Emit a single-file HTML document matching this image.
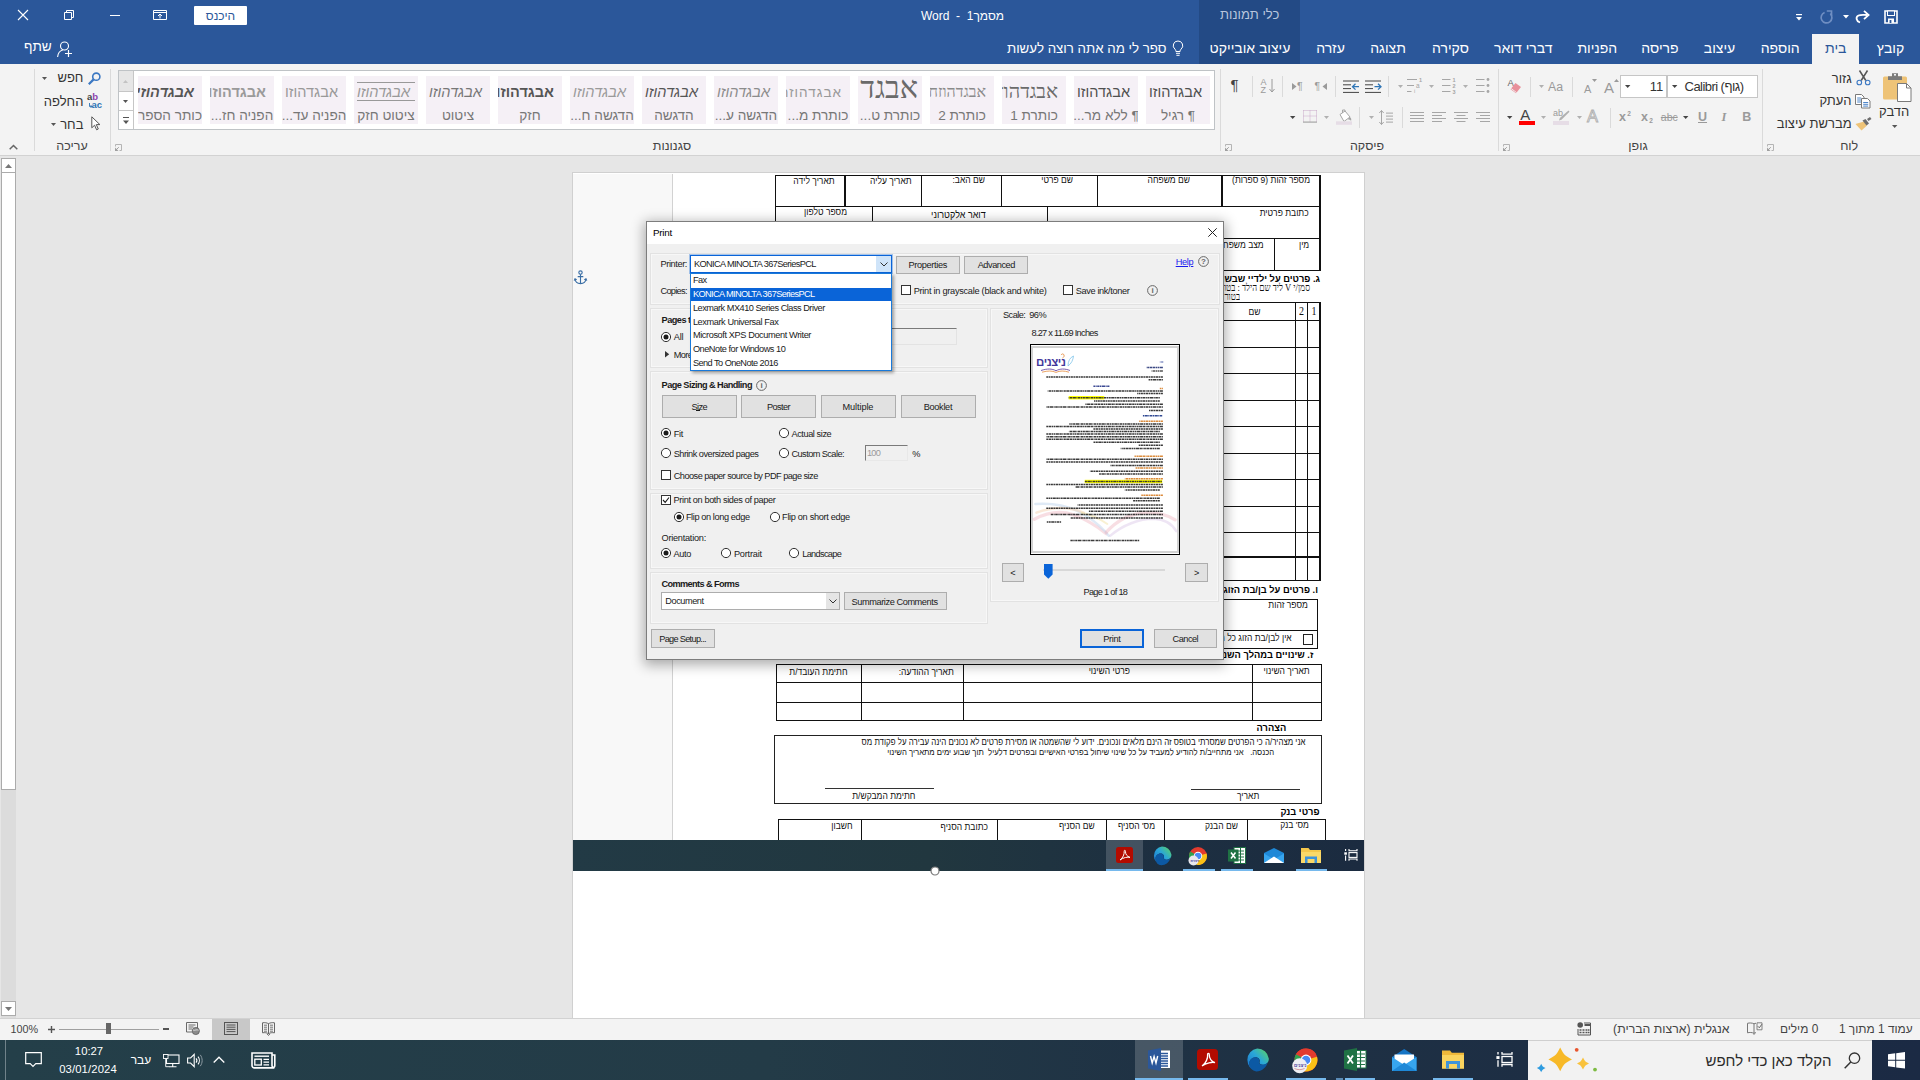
<!DOCTYPE html>
<html lang="he">
<head>
<meta charset="utf-8">
<title>מסמך1 - Word</title>
<style>
html,body{margin:0;padding:0}
body{width:1920px;height:1080px;overflow:hidden;position:relative;background:#e6e6e6;font-family:"Liberation Sans",sans-serif;font-size:12px;color:#262626}
.a{position:absolute}
.t{position:absolute;white-space:nowrap;line-height:16px;height:16px;direction:rtl}
.l{direction:ltr}
svg{position:absolute;overflow:visible}
/* title */
#title{left:0;top:0;width:1920px;height:64px;background:#2b579a}
#ctx{left:1199px;top:0;width:101px;height:64px;background:#234a85}
/* ribbon */
#ribbon{left:0;top:64px;width:1920px;height:91px;background:#f3f3f3;border-bottom:1px solid #d2d2d2}
</style>
</head>
<body>
<!-- TITLE BAR -->
<div id="title" class="a"></div>
<div id="ctx" class="a"></div>
<!-- RIBBON -->
<div id="ribbon" class="a"></div>
<!-- DOC AREA -->
<div id="doc" class="a" style="left:0;top:156px;width:1920px;height:862px;background:#e6e6e6"></div>
<div id="page" class="a" style="left:573px;top:173px;width:791px;height:845px;background:#fff;box-shadow:0 0 0 1px #d0d0d0"></div>
<!-- STATUS BAR -->
<div id="status" class="a" style="left:0;top:1018px;width:1920px;height:22px;background:#f3f3f3;border-top:1px solid #d2d2d2;box-sizing:border-box"></div>
<!-- TASKBAR -->
<div id="taskbar" class="a" style="left:0;top:1040px;width:1920px;height:40px;background:linear-gradient(to right,#243f49 0%,#233b47 40%,#1f3244 60%,#1b2a44 100%)"></div>
<!-- DIALOG -->
<!-- p1_title -->
<svg style="left:17px;top:9px;" width="12" height="12" viewBox="0 0 12 12"><path d="M1 1 L11 11 M11 1 L1 11" stroke="#fff" stroke-width="1.1" fill="none"/></svg>
<svg style="left:63px;top:9px;" width="12" height="12" viewBox="0 0 12 12"><path d="M1.5 3.5 h7 v7 h-7 z M3.5 3.5 v-2 h7 v7 h-2" stroke="#fff" stroke-width="1" fill="none"/></svg>
<div class="a" style="left:110px;top:15px;width:10px;height:1px;background:#fff;"></div>
<svg style="left:153px;top:9px;" width="14" height="12" viewBox="0 0 14 12"><path d="M0.5 1.5 h13 v9 h-13 z M0.5 3.5 h13" stroke="#fff" stroke-width="1" fill="none"/><path d="M7 9.5 v-4.5 M5 7 l2 -2 l2 2" stroke="#fff" stroke-width="1" fill="none"/></svg>
<div class="a" style="left:194px;top:6px;width:53px;height:19px;background:#fff;border-radius:1px"></div>
<div class="t" style="top:9px;font-size:12px;line-height:14px;height:14px;left:-79.50px;width:600px;text-align:center;color:#2b579a;">היכנס</div>
<div class="t" style="top:9px;font-size:12px;line-height:14px;height:14px;left:662.50px;width:600px;text-align:center;color:#fff;direction:rtl;">מסמך1 &nbsp;-&nbsp; Word</div>
<div class="t" style="top:7px;font-size:13px;line-height:15px;height:15px;left:949.70px;width:600px;text-align:center;color:#b9c6dd;">כלי תמונות</div>
<svg style="left:1884px;top:10px;" width="14" height="14" viewBox="0 0 14 14"><path d="M1 1 h12 v12 h-12 z" fill="none" stroke="#fff" stroke-width="1.6"/><rect x="3.5" y="1" width="7" height="4.5" fill="#2b579a" stroke="#fff" stroke-width="1"/><rect x="4" y="8.5" width="6" height="4.5" fill="#fff"/><rect x="5.6" y="10" width="1.8" height="3" fill="#2b579a"/></svg>
<svg style="left:1855px;top:10px;" width="15" height="13" viewBox="0 0 15 13"><path d="M5 12.5 C1 11 0.5 7 3.5 5.5 C5.5 4.6 8 5 12 5" fill="none" stroke="#fff" stroke-width="1.8"/><path d="M9 0.8 L13.6 5 L9 9.2" fill="none" stroke="#fff" stroke-width="1.8"/></svg>
<svg style="left:1842.5px;top:15px;" width="6" height="4" viewBox="0 0 6 4"><path d="M0 0 h6 l-3 3.4 z" fill="#fff"/></svg>
<svg style="left:1820px;top:10px;" width="14" height="13" viewBox="0 0 14 13"><path d="M4.6 2.5 A5.4 5.4 0 1 0 10.3 3.7" fill="none" stroke="#6f8ec2" stroke-width="1.7"/><path d="M6.8 1 h4.7 v4.700" fill="none" stroke="#6f8ec2" stroke-width="1.7"/></svg>
<svg style="left:1795.5px;top:13.5px;" width="6" height="7" viewBox="0 0 6 7"><rect x="0" y="0" width="6" height="1.2" fill="#fff"/><path d="M0 3 h6 l-3 3.6 z" fill="#fff"/></svg>
<div class="a" style="left:1812px;top:34px;width:47px;height:30px;background:#f3f3f3;"></div>
<div class="t" style="top:40px;font-size:14px;line-height:16px;height:16px;left:1535.80px;width:600px;text-align:center;color:#2b579a;">בית</div>
<div class="t" style="top:40px;font-size:14px;line-height:16px;height:16px;left:1590.50px;width:600px;text-align:center;color:#fff;">קובץ</div>
<div class="t" style="top:40px;font-size:14px;line-height:16px;height:16px;left:1480.20px;width:600px;text-align:center;color:#fff;">הוספה</div>
<div class="t" style="top:40px;font-size:14px;line-height:16px;height:16px;left:1419.50px;width:600px;text-align:center;color:#fff;">עיצוב</div>
<div class="t" style="top:40px;font-size:14px;line-height:16px;height:16px;left:1360.00px;width:600px;text-align:center;color:#fff;">פריסה</div>
<div class="t" style="top:40px;font-size:14px;line-height:16px;height:16px;left:1297.30px;width:600px;text-align:center;color:#fff;">הפניות</div>
<div class="t" style="top:40px;font-size:14px;line-height:16px;height:16px;left:1223.30px;width:600px;text-align:center;color:#fff;">דברי דואר</div>
<div class="t" style="top:40px;font-size:14px;line-height:16px;height:16px;left:1150.50px;width:600px;text-align:center;color:#fff;">סקירה</div>
<div class="t" style="top:40px;font-size:14px;line-height:16px;height:16px;left:1088.00px;width:600px;text-align:center;color:#fff;">תצוגה</div>
<div class="t" style="top:40px;font-size:14px;line-height:16px;height:16px;left:1030.50px;width:600px;text-align:center;color:#fff;">עזרה</div>
<div class="t" style="top:40px;font-size:14px;line-height:16px;height:16px;left:950.00px;width:600px;text-align:center;color:#fff;">עיצוב אובייקט</div>
<svg style="left:1172px;top:40px;" width="12" height="17" viewBox="0 0 12 17"><path d="M6 1 a4.6 4.6 0 0 1 3 8.2 c-0.7 0.7 -0.9 1.3 -0.9 2.3 h-4.2 c0 -1 -0.2 -1.6 -0.9 -2.3 a4.6 4.6 0 0 1 3 -8.2 z M4 13.3 h4 M4.4 15.3 h3.2" fill="none" stroke="#fff" stroke-width="1"/></svg>
<div class="t" style="top:41px;font-size:13.3px;line-height:15px;height:15px;right:753.50px;color:#fff;">ספר לי מה אתה רוצה לעשות</div>
<svg style="left:57px;top:41px;" width="16" height="17" viewBox="0 0 16 17"><circle cx="7.5" cy="5" r="4" fill="none" stroke="#fff" stroke-width="1.1"/><path d="M0.6 16 c0.4 -4 2.6 -6.4 5.2 -7" fill="none" stroke="#fff" stroke-width="1.1"/><path d="M11.5 9 v7 M8 12.5 h7" stroke="#fff" stroke-width="1.2"/></svg>
<div class="t" style="top:39px;font-size:13.6px;line-height:15px;height:15px;left:24.00px;color:#fff;">שתף</div>
<!-- p2_ribbon -->
<svg style="left:1883px;top:72px;" width="29" height="31" viewBox="0 0 29 31"><rect x="0" y="4.5" width="24" height="23" rx="1.5" fill="#eec377"/><path d="M5 4.2 h14 v3.8 h-14 z M9 1.2 h6 v3 h-6 z" fill="#7a7a7a"/><rect x="11" y="2" width="2" height="1.6" fill="#f3f3f3"/><path d="M14.5 11.5 h9 l4.5 4.5 v13.5 h-13.5 z" fill="#fff" stroke="#7a7a7a" stroke-width="1"/><path d="M23.5 11.5 v4.5 h4.5" fill="none" stroke="#7a7a7a" stroke-width="1"/></svg>
<div class="t" style="top:104px;font-size:13px;line-height:15px;height:15px;left:1594.20px;width:600px;text-align:center;color:#333;">הדבק</div>
<svg style="left:1892px;top:125.2px;" width="5.4" height="3" viewBox="0 0 5.4 3"><path d="M0 0 h5.4 l-2.7 3 z" fill="#555"/></svg>
<svg style="left:1855.5px;top:70px;" width="15" height="15.5" viewBox="0 0 15 15.5"><path d="M3.5 0.5 L9.8 10.5 M11.5 0.5 L5.2 10.5" stroke="#555" stroke-width="1.5" fill="none"/><circle cx="3.3" cy="12.5" r="2.3" fill="none" stroke="#3b78c3" stroke-width="1.1"/><circle cx="11.7" cy="12.5" r="2.3" fill="none" stroke="#3b78c3" stroke-width="1.1"/></svg>
<div class="t" style="top:71px;font-size:13px;line-height:15px;height:15px;right:68.20px;color:#333;">גזור</div>
<svg style="left:1855px;top:94px;" width="16" height="15" viewBox="0 0 16 15"><path d="M0.5 0.5 h6 l2.5 2.5 v7.5 h-8.5 z" fill="#fff" stroke="#7a7a7a" stroke-width="1"/><path d="M2.2 4 h4 M2.2 6 h4 M2.2 8 h4" stroke="#3b78c3" stroke-width="0.9"/><path d="M6.5 4.5 h6 l2.5 2.5 v7 h-8.5 z" fill="#fff" stroke="#7a7a7a" stroke-width="1"/><path d="M8.2 8.5 h5 M8.2 10.3 h5 M8.2 12.1 h5" stroke="#3b78c3" stroke-width="0.9"/></svg>
<div class="t" style="top:93px;font-size:13px;line-height:15px;height:15px;right:68.40px;color:#333;">העתק</div>
<svg style="left:1855px;top:117px;" width="17" height="14" viewBox="0 0 17 14"><path d="M0.5 7 L9 4.5 L12 8.5 L6.5 13.5 z" fill="#eec377"/><path d="M7.5 3.5 l3 -1.5 l3.5 4.5 l-2.5 2 z" fill="#6d6d6d"/><path d="M12 2 l3 -2 l1.5 2 l-3 2 z" fill="#6d6d6d"/></svg>
<div class="t" style="top:116px;font-size:13px;line-height:15px;height:15px;right:68.40px;color:#333;">מברשת עיצוב</div>
<div class="t" style="top:139px;font-size:12.5px;line-height:14px;height:14px;left:1549.20px;width:600px;text-align:center;color:#444;">לוח</div>
<svg style="left:1767px;top:144px;" width="7" height="7" viewBox="0 0 7 7"><path d="M0.5 2.5 v-2 h6 v6 h-2" fill="none" stroke="#b4b4b4" stroke-width="1"/><path d="M0.8 6.200 l3 -3" fill="none" stroke="#a0a0a0" stroke-width="1"/><path d="M0 3.500 v3.500 h3.500 z" fill="#a0a0a0"/></svg>
<div class="a" style="left:1762px;top:68.5px;width:1px;height:82.5px;background:#dadada;"></div>
<div class="a" style="left:1667px;top:75px;width:91px;height:23px;background:#fff;border:1px solid #c6c6c6;box-sizing:border-box;"></div>
<div class="a" style="left:1620px;top:75px;width:47px;height:23px;background:#fff;border:1px solid #c6c6c6;box-sizing:border-box;"></div>
<div class="t" style="top:79px;font-size:13px;line-height:15px;height:15px;right:176.50px;color:#333;letter-spacing:-0.55px;direction:ltr;">Calibri (גוף)</div>
<svg style="left:1672px;top:85px;" width="5.4" height="3" viewBox="0 0 5.4 3"><path d="M0 0 h5.4 l-2.7 3 z" fill="#444"/></svg>
<div class="t" style="top:79px;font-size:13px;line-height:15px;height:15px;right:256.70px;color:#333;">11</div>
<svg style="left:1625px;top:85px;" width="5.4" height="3" viewBox="0 0 5.4 3"><path d="M0 0 h5.4 l-2.7 3 z" fill="#444"/></svg>
<div class="t" style="top:79px;font-size:15px;line-height:17px;height:17px;left:1604.00px;color:#9a9a9a;">A</div>
<svg style="left:1613.5px;top:79px;" width="5" height="3" viewBox="0 0 5 3"><path d="M0 3 h5 l-2.5 -3 z" fill="#9a9a9a"/></svg>
<div class="t" style="top:83px;font-size:11px;line-height:12px;height:12px;left:1584.00px;color:#9a9a9a;">A</div>
<svg style="left:1591.5px;top:79px;" width="5" height="3" viewBox="0 0 5 3"><path d="M0 0 h5 l-2.5 3 z" fill="#9a9a9a"/></svg>
<div class="a" style="left:1572px;top:76.5px;width:1px;height:20.0px;background:#dadada;"></div>
<div class="t" style="top:80px;font-size:12.3px;line-height:14px;height:14px;left:1548.00px;color:#9a9a9a;">Aa</div>
<svg style="left:1539px;top:85px;" width="5" height="3" viewBox="0 0 5 3"><path d="M0 0 h5 l-2.5 3 z" fill="#b0b0b0"/></svg>
<div class="a" style="left:1530px;top:76.5px;width:1px;height:20.0px;background:#dadada;"></div>
<svg style="left:1507px;top:78px;" width="16" height="16" viewBox="0 0 16 16"><text x="0.5" y="8" font-size="9.5" font-family="Liberation Sans" fill="#666">A</text><path d="M8.5 5 l5.5 4 l-5 6.3 l-5.5 -4 z" fill="#e8909b"/><path d="M4.2 10.6 l5.4 4" stroke="#f3f3f3" stroke-width="0.9"/></svg>
<div class="t" style="top:110px;font-size:12.5px;line-height:14px;height:14px;left:1742.30px;color:#9a9a9a;font-weight:700;">B</div>
<div class="t" style="top:110px;font-size:12.5px;line-height:14px;height:14px;left:1721.50px;color:#9a9a9a;font-weight:700;font-family:'Liberation Serif',serif;font-style:italic;">I</div>
<div class="t" style="top:110px;font-size:12.5px;line-height:14px;height:14px;left:1698.00px;color:#9a9a9a;font-weight:700;text-decoration:underline;">U</div>
<svg style="left:1683px;top:116px;" width="5.4" height="3" viewBox="0 0 5.4 3"><path d="M0 0 h5.4 l-2.7 3 z" fill="#444"/></svg>
<div class="t" style="top:111px;font-size:10.5px;line-height:12px;height:12px;left:1660.80px;color:#9a9a9a;text-decoration:line-through;">abc</div>
<div class="t" style="top:110px;font-size:12.5px;line-height:14px;height:14px;left:1641.00px;color:#9a9a9a;font-weight:700;">x</div>
<div class="t" style="top:117px;font-size:6.5px;line-height:7px;height:7px;left:1649.30px;color:#9a9a9a;font-weight:700;">2</div>
<div class="t" style="top:110px;font-size:12.5px;line-height:14px;height:14px;left:1619.00px;color:#9a9a9a;font-weight:700;">x</div>
<div class="t" style="top:110px;font-size:6.5px;line-height:7px;height:7px;left:1627.30px;color:#9a9a9a;font-weight:700;">2</div>
<div class="a" style="left:1610px;top:107.5px;width:1px;height:20.0px;background:#dadada;"></div>
<svg style="left:1586px;top:108px;" width="16" height="16" viewBox="0 0 16 16"><text x="1" y="13.600" font-size="16.500" font-family="Liberation Sans" fill="#fafafa" stroke="#b0b0b0" stroke-width="0.9">A</text></svg>
<svg style="left:1577px;top:116px;" width="5" height="3" viewBox="0 0 5 3"><path d="M0 0 h5 l-2.5 3 z" fill="#b0b0b0"/></svg>
<div class="t" style="top:108px;font-size:9px;line-height:10px;height:10px;left:1553.00px;color:#9a9a9a;">ab</div>
<svg style="left:1557px;top:110px;" width="13" height="11" viewBox="0 0 13 11"><path d="M11.5 0.5 l1 1.2 l-8 8 l-2.5 0.8 l0.8 -2.5 z" fill="#b0b0b0"/></svg>
<div class="a" style="left:1553px;top:121px;width:16px;height:3.6px;background:#e6dde6;"></div>
<svg style="left:1540.7px;top:116px;" width="5" height="3" viewBox="0 0 5 3"><path d="M0 0 h5 l-2.5 3 z" fill="#b0b0b0"/></svg>
<div class="t" style="top:106px;font-size:15px;line-height:17px;height:17px;left:1520.30px;color:#444;">A</div>
<div class="a" style="left:1519px;top:121px;width:16px;height:3.7px;background:#ff0000;"></div>
<svg style="left:1507px;top:116px;" width="5.4" height="3" viewBox="0 0 5.4 3"><path d="M0 0 h5.4 l-2.7 3 z" fill="#444"/></svg>
<div class="t" style="top:139px;font-size:12.5px;line-height:14px;height:14px;left:1338.00px;width:600px;text-align:center;color:#444;">גופן</div>
<svg style="left:1503px;top:144px;" width="7" height="7" viewBox="0 0 7 7"><path d="M0.5 2.5 v-2 h6 v6 h-2" fill="none" stroke="#b4b4b4" stroke-width="1"/><path d="M0.8 6.200 l3 -3" fill="none" stroke="#a0a0a0" stroke-width="1"/><path d="M0 3.500 v3.500 h3.500 z" fill="#a0a0a0"/></svg>
<div class="a" style="left:1498px;top:68.5px;width:1px;height:82.5px;background:#dadada;"></div>
<svg style="left:1475.5px;top:78px;" width="14" height="15" viewBox="0 0 14 15"><rect x="0" y="1" width="8.5" height="1" fill="#a6a6a6"/><circle cx="12" cy="1.5" r="1.4" fill="#a6a6a6"/><rect x="0" y="7" width="8.5" height="1" fill="#a6a6a6"/><circle cx="12" cy="7.5" r="1.4" fill="#a6a6a6"/><rect x="0" y="13" width="8.5" height="1" fill="#a6a6a6"/><circle cx="12" cy="13.5" r="1.4" fill="#a6a6a6"/></svg>
<svg style="left:1463px;top:85px;" width="5" height="3" viewBox="0 0 5 3"><path d="M0 0 h5 l-2.5 3 z" fill="#b0b0b0"/></svg>
<svg style="left:1441.8px;top:78px;" width="14" height="15" viewBox="0 0 14 15"><rect x="0" y="1" width="8.5" height="1" fill="#a6a6a6"/><text x="10.5" y="3.7" font-size="5.5" font-family="Liberation Sans" fill="#a6a6a6" font-weight="700">1</text><rect x="0" y="7" width="8.5" height="1" fill="#a6a6a6"/><text x="10.5" y="9.7" font-size="5.5" font-family="Liberation Sans" fill="#a6a6a6" font-weight="700">2</text><rect x="0" y="13" width="8.5" height="1" fill="#a6a6a6"/><text x="10.5" y="15.7" font-size="5.5" font-family="Liberation Sans" fill="#a6a6a6" font-weight="700">3</text></svg>
<svg style="left:1429px;top:85px;" width="5" height="3" viewBox="0 0 5 3"><path d="M0 0 h5 l-2.5 3 z" fill="#b0b0b0"/></svg>
<svg style="left:1406.8px;top:78px;" width="16" height="15" viewBox="0 0 16 15"><rect x="0" y="1" width="10" height="1" fill="#a6a6a6"/><rect x="0" y="7" width="7" height="1" fill="#a6a6a6"/><rect x="0" y="13" width="4.5" height="1" fill="#a6a6a6"/><text x="12" y="3.5" font-size="5.5" font-family="Liberation Sans" fill="#a6a6a6" font-weight="700">1</text><text x="9" y="9.6" font-size="6.5" font-family="Liberation Sans" fill="#a6a6a6">a</text><text x="7" y="15.3" font-size="5.5" font-family="Liberation Sans" fill="#a6a6a6">i</text></svg>
<svg style="left:1397.7px;top:85px;" width="5" height="3" viewBox="0 0 5 3"><path d="M0 0 h5 l-2.5 3 z" fill="#b0b0b0"/></svg>
<div class="a" style="left:1388px;top:76px;width:1px;height:20.5px;background:#dadada;"></div>
<svg style="left:1365px;top:79.5px;" width="16.5" height="13" viewBox="0 0 16.5 13"><rect x="0" y="0.5" width="16" height="1" fill="#444"/><rect x="0" y="4.3" width="8" height="1" fill="#444"/><rect x="0" y="8.1" width="8" height="1" fill="#444"/><rect x="0" y="11.9" width="16" height="1" fill="#444" /><path d="M9.5 6.7 h6 M13 3.8 l3 2.9 l-3 2.9" fill="none" stroke="#2e75b6" stroke-width="1.3"/></svg>
<svg style="left:1343px;top:79.5px;" width="16.5" height="13" viewBox="0 0 16.5 13"><rect x="0" y="0.5" width="16" height="1" fill="#444"/><rect x="0" y="4.3" width="8" height="1" fill="#444"/><rect x="0" y="8.1" width="8" height="1" fill="#444"/><rect x="0" y="11.9" width="16" height="1" fill="#444" /><path d="M16 6.7 h-6 M12.5 3.8 l-3 2.9 l3 2.9" fill="none" stroke="#2e75b6" stroke-width="1.3"/></svg>
<div class="a" style="left:1335px;top:76px;width:1px;height:20.5px;background:#dadada;"></div>
<div class="t" style="top:80px;font-size:10.5px;line-height:12px;height:12px;left:1314.50px;color:#9a9a9a;">¶</div>
<svg style="left:1321.5px;top:82.5px;" width="5" height="7" viewBox="0 0 5 7"><path d="M5 0 v7 l-4.5 -3.5 z" fill="#9a9a9a"/></svg>
<div class="t" style="top:80px;font-size:10.5px;line-height:12px;height:12px;left:1297.00px;color:#9a9a9a;">¶</div>
<svg style="left:1291.5px;top:82.5px;" width="5" height="7" viewBox="0 0 5 7"><path d="M0 0 v7 l4.5 -3.5 z" fill="#9a9a9a"/></svg>
<div class="a" style="left:1282px;top:76px;width:1px;height:20.5px;background:#dadada;"></div>
<div class="t" style="top:77px;font-size:9px;line-height:10px;height:10px;left:1260.50px;color:#9a9a9a;">A</div>
<div class="t" style="top:85px;font-size:9px;line-height:10px;height:10px;left:1260.50px;color:#9a9a9a;">Z</div>
<svg style="left:1268.5px;top:78.5px;" width="6" height="14" viewBox="0 0 6 14"><path d="M3 0 v13 M0.5 10 l2.5 3 l2.5 -3" fill="none" stroke="#9a9a9a" stroke-width="1"/></svg>
<div class="a" style="left:1252px;top:76px;width:1px;height:20.5px;background:#dadada;"></div>
<div class="t" style="top:76px;font-size:15px;line-height:17px;height:17px;left:1230.50px;color:#444;">¶</div>
<svg style="left:1475.8px;top:112px;" width="14" height="12" viewBox="0 0 14 12"><rect x="0" y="0.0" width="14" height="1" fill="#a6a6a6"/><rect x="4" y="3.0" width="10" height="1" fill="#a6a6a6"/><rect x="0" y="6.0" width="14" height="1" fill="#a6a6a6"/><rect x="4" y="9.0" width="10" height="1" fill="#a6a6a6"/></svg>
<svg style="left:1454px;top:112px;" width="14" height="12" viewBox="0 0 14 12"><rect x="0.0" y="0.0" width="14" height="1" fill="#a6a6a6"/><rect x="2.5" y="3.0" width="9" height="1" fill="#a6a6a6"/><rect x="0.0" y="6.0" width="14" height="1" fill="#a6a6a6"/><rect x="2.5" y="9.0" width="9" height="1" fill="#a6a6a6"/></svg>
<svg style="left:1432px;top:112px;" width="14" height="12" viewBox="0 0 14 12"><rect x="0" y="0.0" width="14" height="1" fill="#a6a6a6"/><rect x="0" y="3.0" width="10" height="1" fill="#a6a6a6"/><rect x="0" y="6.0" width="14" height="1" fill="#a6a6a6"/><rect x="0" y="9.0" width="10" height="1" fill="#a6a6a6"/></svg>
<svg style="left:1410px;top:112px;" width="14" height="12" viewBox="0 0 14 12"><rect x="0" y="0.0" width="14" height="1" fill="#a6a6a6"/><rect x="0" y="3.0" width="14" height="1" fill="#a6a6a6"/><rect x="0" y="6.0" width="14" height="1" fill="#a6a6a6"/><rect x="0" y="9.0" width="14" height="1" fill="#a6a6a6"/></svg>
<div class="a" style="left:1402px;top:107px;width:1px;height:20.5px;background:#dadada;"></div>
<svg style="left:1378.8px;top:109.5px;" width="14" height="15" viewBox="0 0 14 15"><path d="M2.5 0.5 v14 M0.3 3 l2.2 -2.5 l2.2 2.5 M0.3 12 l2.2 2.5 l2.2 -2.5" fill="none" stroke="#a6a6a6" stroke-width="1"/><rect x="7" y="2.6" width="7" height="1" fill="#a6a6a6"/><rect x="7" y="5.6" width="7" height="1" fill="#a6a6a6"/><rect x="7" y="8.6" width="7" height="1" fill="#a6a6a6"/><rect x="7" y="11.6" width="7" height="1" fill="#a6a6a6"/></svg>
<svg style="left:1368.8px;top:116px;" width="5" height="3" viewBox="0 0 5 3"><path d="M0 0 h5 l-2.5 3 z" fill="#b0b0b0"/></svg>
<div class="a" style="left:1359px;top:107px;width:1px;height:20.5px;background:#dadada;"></div>
<svg style="left:1336px;top:109px;" width="16" height="16" viewBox="0 0 16 16"><path d="M4 5.5 l5 -3.5 l5 6 l-6 4.5 z" fill="#fff" stroke="#a6a6a6" stroke-width="1"/><path d="M6.5 4 v-3 h2.5 v2" fill="none" stroke="#a6a6a6" stroke-width="1"/><path d="M13.5 8 c1.5 0.5 2.2 2 1.6 3.8 c-1 -1 -1.8 -1.5 -3.3 -1.6 z" fill="#a6a6a6"/><rect x="0" y="12.3" width="16" height="3.5" fill="#e6dde6"/></svg>
<svg style="left:1324px;top:116px;" width="5" height="3" viewBox="0 0 5 3"><path d="M0 0 h5 l-2.5 3 z" fill="#b0b0b0"/></svg>
<svg style="left:1302.8px;top:110px;" width="14" height="13" viewBox="0 0 14 13"><path d="M0.5 0.5 h13 M0.5 6 h13 M0.5 0.5 v11 M7 0.5 v11 M13.5 0.5 v11" fill="none" stroke="#c9a9c9" stroke-width="1" stroke-dasharray="1 1"/><rect x="0" y="11.5" width="14" height="1.2" fill="#a6a6a6"/></svg>
<svg style="left:1289.7px;top:116px;" width="5.4" height="3" viewBox="0 0 5.4 3"><path d="M0 0 h5.4 l-2.7 3 z" fill="#444"/></svg>
<div class="t" style="top:139px;font-size:12.5px;line-height:14px;height:14px;left:1067.00px;width:600px;text-align:center;color:#444;">פיסקה</div>
<svg style="left:1225px;top:144px;" width="7" height="7" viewBox="0 0 7 7"><path d="M0.5 2.5 v-2 h6 v6 h-2" fill="none" stroke="#b4b4b4" stroke-width="1"/><path d="M0.8 6.200 l3 -3" fill="none" stroke="#a0a0a0" stroke-width="1"/><path d="M0 3.500 v3.500 h3.500 z" fill="#a0a0a0"/></svg>
<div class="a" style="left:1220px;top:68.5px;width:1px;height:82.5px;background:#dadada;"></div>
<div class="a" style="left:118px;top:70px;width:1097px;height:60px;background:#fff;border:1px solid #bfc3c6;box-sizing:border-box;"></div>
<div class="a" style="left:119px;top:71px;width:14px;height:20.5px;background:#e6e6e6;"></div>
<div class="a" style="left:132.5px;top:71px;width:1px;height:58px;background:#c6c6c6;"></div>
<div class="a" style="left:119px;top:91.3px;width:14px;height:1px;background:#c6c6c6;"></div>
<div class="a" style="left:119px;top:110.2px;width:14px;height:1px;background:#c6c6c6;"></div>
<svg style="left:123.3px;top:79.5px;" width="5" height="3" viewBox="0 0 5 3"><path d="M0 3 h5 l-2.5 -3 z" fill="#c3c3c3"/></svg>
<svg style="left:123.3px;top:100px;" width="5" height="3" viewBox="0 0 5 3"><path d="M0 0 h5 l-2.5 3 z" fill="#555"/></svg>
<svg style="left:123px;top:116.5px;" width="6" height="8" viewBox="0 0 6 8"><rect x="0" y="0" width="6" height="1" fill="#555"/><path d="M0 3.5 h6 l-3 3.6 z" fill="#555"/></svg>
<div class="a" style="left:1146px;top:76px;width:64px;height:47.7px;background:#f5f0f6;overflow:hidden;direction:rtl;"><div class="t" style="top:8px;font-size:14.5px;line-height:16px;height:16px;right:8px;color:#505050;">אבגדהוזו</div>
<div class="t" style="top:32px;font-size:13.6px;line-height:15px;height:15px;left:-268.00px;width:600px;text-align:center;color:#777;">¶ רגיל</div>
</div>
<div class="a" style="left:1074px;top:76px;width:64px;height:47.7px;background:#f5f0f6;overflow:hidden;direction:rtl;"><div class="t" style="top:8px;font-size:14.5px;line-height:16px;height:16px;right:8px;color:#505050;">אבגדהוזו</div>
<div class="t" style="top:32px;font-size:13.6px;line-height:15px;height:15px;left:-268.00px;width:600px;text-align:center;color:#777;">¶ ללא מר...</div>
</div>
<div class="a" style="left:1002px;top:76px;width:64px;height:47.7px;background:#f5f0f6;overflow:hidden;direction:rtl;"><div class="t" style="top:4px;font-size:20px;line-height:22px;height:22px;right:8px;color:#6a6a6a;font-family:'Liberation Serif',serif;">אבגדהוז</div>
<div class="t" style="top:32px;font-size:13.6px;line-height:15px;height:15px;left:-268.00px;width:600px;text-align:center;color:#777;">כותרת 1</div>
</div>
<div class="a" style="left:930px;top:76px;width:64px;height:47.7px;background:#f5f0f6;overflow:hidden;direction:rtl;"><div class="t" style="top:7px;font-size:16px;line-height:17px;height:17px;right:8px;color:#8a8a8a;font-family:'Liberation Serif',serif;">אבגדהוזח</div>
<div class="t" style="top:32px;font-size:13.6px;line-height:15px;height:15px;left:-268.00px;width:600px;text-align:center;color:#777;">כותרת 2</div>
</div>
<div class="a" style="left:858px;top:76px;width:64px;height:47.7px;background:#f5f0f6;overflow:hidden;direction:rtl;"><div class="t" style="top:-5px;font-size:30.5px;line-height:34px;height:34px;right:4px;color:#6a6a6a;font-family:'Liberation Serif',serif;">אבגד</div>
<div class="t" style="top:32px;font-size:13.6px;line-height:15px;height:15px;left:-268.00px;width:600px;text-align:center;color:#777;">כותרת ט...</div>
</div>
<div class="a" style="left:786px;top:76px;width:64px;height:47.7px;background:#f5f0f6;overflow:hidden;direction:rtl;"><div class="t" style="top:9px;font-size:13.5px;line-height:15px;height:15px;right:8px;color:#999;letter-spacing:1px;">אבגדהוזח</div>
<div class="t" style="top:32px;font-size:13.6px;line-height:15px;height:15px;left:-268.00px;width:600px;text-align:center;color:#777;">כותרת מ...</div>
</div>
<div class="a" style="left:714px;top:76px;width:64px;height:47.7px;background:#f5f0f6;overflow:hidden;direction:rtl;"><div class="t" style="top:8px;font-size:14.5px;line-height:16px;height:16px;right:8px;color:#8c8c8c;font-style:italic;">אבגדהוזו</div>
<div class="t" style="top:32px;font-size:13.6px;line-height:15px;height:15px;left:-268.00px;width:600px;text-align:center;color:#777;">הדגשה ע...</div>
</div>
<div class="a" style="left:642px;top:76px;width:64px;height:47.7px;background:#f5f0f6;overflow:hidden;direction:rtl;"><div class="t" style="top:8px;font-size:14.5px;line-height:16px;height:16px;right:8px;color:#555;font-style:italic;">אבגדהוזו</div>
<div class="t" style="top:32px;font-size:13.6px;line-height:15px;height:15px;left:-268.00px;width:600px;text-align:center;color:#777;">הדגשה</div>
</div>
<div class="a" style="left:570px;top:76px;width:64px;height:47.7px;background:#f5f0f6;overflow:hidden;direction:rtl;"><div class="t" style="top:8px;font-size:14.5px;line-height:16px;height:16px;right:8px;color:#9a9a9a;font-style:italic;">אבגדהוזו</div>
<div class="t" style="top:32px;font-size:13.6px;line-height:15px;height:15px;left:-268.00px;width:600px;text-align:center;color:#777;">הדגשה ח...</div>
</div>
<div class="a" style="left:498px;top:76px;width:64px;height:47.7px;background:#f5f0f6;overflow:hidden;direction:rtl;"><div class="t" style="top:8px;font-size:14.5px;line-height:16px;height:16px;right:8px;color:#555;font-weight:700;">אבגדהוזו</div>
<div class="t" style="top:32px;font-size:13.6px;line-height:15px;height:15px;left:-268.00px;width:600px;text-align:center;color:#777;">חזק</div>
</div>
<div class="a" style="left:426px;top:76px;width:64px;height:47.7px;background:#f5f0f6;overflow:hidden;direction:rtl;"><div class="t" style="top:8px;font-size:14.5px;line-height:16px;height:16px;right:8px;color:#777;font-style:italic;">אבגדהוזו</div>
<div class="t" style="top:32px;font-size:13.6px;line-height:15px;height:15px;left:-268.00px;width:600px;text-align:center;color:#777;">ציטוט</div>
</div>
<div class="a" style="left:354px;top:76px;width:64px;height:47.7px;background:#f5f0f6;overflow:hidden;direction:rtl;"><div class="t" style="top:8px;font-size:14.5px;line-height:16px;height:16px;right:8px;color:#999;font-style:italic;">אבגדהוזו</div>
<div class="a" style="left:3px;top:5.6px;width:58px;height:1px;background:#999;"></div>
<div class="a" style="left:3px;top:24px;width:58px;height:1px;background:#999;"></div>
<div class="t" style="top:32px;font-size:13.6px;line-height:15px;height:15px;left:-268.00px;width:600px;text-align:center;color:#777;">ציטוט חזק</div>
</div>
<div class="a" style="left:282px;top:76px;width:64px;height:47.7px;background:#f5f0f6;overflow:hidden;direction:rtl;"><div class="t" style="top:8px;font-size:14.5px;line-height:16px;height:16px;right:8px;color:#999;">אבגדהוזו</div>
<div class="t" style="top:32px;font-size:13.6px;line-height:15px;height:15px;left:-268.00px;width:600px;text-align:center;color:#777;">הפניה עד...</div>
</div>
<div class="a" style="left:210px;top:76px;width:64px;height:47.7px;background:#f5f0f6;overflow:hidden;direction:rtl;"><div class="t" style="top:8px;font-size:14.5px;line-height:16px;height:16px;right:8px;color:#9a9a9a;font-weight:700;">אבגדהוזו</div>
<div class="t" style="top:32px;font-size:13.6px;line-height:15px;height:15px;left:-268.00px;width:600px;text-align:center;color:#777;">הפניה חז...</div>
</div>
<div class="a" style="left:138px;top:76px;width:64px;height:47.7px;background:#f5f0f6;overflow:hidden;direction:rtl;"><div class="t" style="top:8px;font-size:14.5px;line-height:16px;height:16px;right:8px;color:#555;font-weight:700;font-style:italic;">אבגדהוזי</div>
<div class="t" style="top:32px;font-size:13.6px;line-height:15px;height:15px;left:-268.00px;width:600px;text-align:center;color:#777;">כותר הספר</div>
</div>
<div class="t" style="top:139px;font-size:12.5px;line-height:14px;height:14px;left:372.00px;width:600px;text-align:center;color:#444;">סגנונות</div>
<svg style="left:115px;top:144px;" width="7" height="7" viewBox="0 0 7 7"><path d="M0.5 2.5 v-2 h6 v6 h-2" fill="none" stroke="#b4b4b4" stroke-width="1"/><path d="M0.8 6.200 l3 -3" fill="none" stroke="#a0a0a0" stroke-width="1"/><path d="M0 3.500 v3.500 h3.500 z" fill="#a0a0a0"/></svg>
<div class="a" style="left:110px;top:68.5px;width:1px;height:82.5px;background:#dadada;"></div>
<div class="a" style="left:34px;top:68.5px;width:1px;height:82.5px;background:#dadada;"></div>
<svg style="left:88px;top:72px;" width="14" height="13" viewBox="0 0 14 13"><circle cx="8.3" cy="4.7" r="3.6" fill="none" stroke="#3b78c3" stroke-width="1.6"/><path d="M5.6 7.4 L0.8 12.2" stroke="#3b78c3" stroke-width="2.2"/></svg>
<div class="t" style="top:70px;font-size:13px;line-height:15px;height:15px;right:1836.60px;color:#333;">חפש</div>
<svg style="left:42px;top:77.3px;" width="5" height="3" viewBox="0 0 5 3"><path d="M0 0 h5 l-2.5 3 z" fill="#555"/></svg>
<div class="t" style="top:91px;font-size:9.5px;line-height:11px;height:11px;left:87.00px;color:#444;font-weight:700;">a</div>
<div class="t" style="top:91px;font-size:9.5px;line-height:11px;height:11px;left:92.20px;color:#8e44ad;font-weight:700;">b</div>
<div class="t" style="top:99px;font-size:9.5px;line-height:11px;height:11px;left:91.50px;color:#2e75b6;font-weight:700;">ac</div>
<svg style="left:86.5px;top:103px;" width="5" height="5" viewBox="0 0 5 5"><path d="M2.5 0 v3.5 h2.5 M3.5 2 l1.5 1.5 l-1.5 1.5" fill="none" stroke="#2e75b6" stroke-width="0.9"/></svg>
<div class="t" style="top:94px;font-size:13px;line-height:15px;height:15px;right:1836.60px;color:#333;">החלפה</div>
<svg style="left:90.5px;top:116px;" width="10" height="15" viewBox="0 0 10 15"><path d="M0.8 0.8 v11 l2.8 -2.6 l2 4.6 l1.7 -0.8 l-2 -4.4 h3.6 z" fill="#fff" stroke="#555" stroke-width="1"/></svg>
<div class="t" style="top:117px;font-size:13px;line-height:15px;height:15px;right:1836.60px;color:#333;">בחר</div>
<svg style="left:50.6px;top:123.4px;" width="5" height="3" viewBox="0 0 5 3"><path d="M0 0 h5 l-2.5 3 z" fill="#555"/></svg>
<div class="t" style="top:139px;font-size:12.5px;line-height:14px;height:14px;left:-228.00px;width:600px;text-align:center;color:#444;">עריכה</div>
<svg style="left:9px;top:144px;" width="9" height="6" viewBox="0 0 9 6"><path d="M0.7 5.3 L4.5 1.5 L8.3 5.3" fill="none" stroke="#666" stroke-width="1.5"/></svg>
<!-- p3_doc -->
<div class="a" style="left:1px;top:158px;width:15px;height:860px;background:#dcdcdc;"></div>
<div class="a" style="left:1px;top:158px;width:15px;height:15px;background:#fff;border:1px solid #ababab;box-sizing:border-box;"></div>
<svg style="left:5px;top:163.5px;" width="7" height="4" viewBox="0 0 7 4"><path d="M0 4 h7 l-3.5 -4 z" fill="#777"/></svg>
<div class="a" style="left:1px;top:172px;width:15px;height:618px;background:#fff;border:1px solid #ababab;box-sizing:border-box;"></div>
<div class="a" style="left:1px;top:1001px;width:15px;height:15px;background:#fff;border:1px solid #ababab;box-sizing:border-box;"></div>
<svg style="left:5px;top:1007px;" width="7" height="4" viewBox="0 0 7 4"><path d="M0 0 h7 l-3.5 4 z" fill="#777"/></svg>
<div class="a" style="left:573px;top:174px;width:99.5px;height:666px;background:#f8f8f8;"></div>
<div class="a" style="left:672px;top:174px;width:1px;height:666px;background:#d2d2d2;"></div>
<svg style="left:574px;top:270px;" width="13" height="15" viewBox="0 0 13 15"><circle cx="6.5" cy="2.6" r="1.7" fill="none" stroke="#3a6ea5" stroke-width="1.1"/><path d="M6.5 4.3 v9.2 M3.7 6.6 h5.6 M1 9 c0.3 3 2.5 4.6 5.5 4.6 c3 0 5.2 -1.6 5.5 -4.6 M0.2 10.6 l0.8 -1.8 l1.7 1 M12.8 10.6 l-0.8 -1.8 l-1.7 1" fill="none" stroke="#3a6ea5" stroke-width="1.1"/></svg>
<div class="a" style="left:775px;top:174.7px;width:545.6px;height:1.3px;background:#111;"></div>
<div class="a" style="left:775px;top:206.0px;width:545.6px;height:1.3px;background:#111;"></div>
<div class="a" style="left:775px;top:237.5px;width:545.6px;height:1.3px;background:#111;"></div>
<div class="a" style="left:1222px;top:269.9px;width:98.6px;height:1.3px;background:#111;"></div>
<div class="a" style="left:774.9px;top:175px;width:1.3px;height:63.5px;background:#111;"></div>
<div class="a" style="left:1319.3px;top:175px;width:1.3px;height:96px;background:#111;"></div>
<div class="a" style="left:844.4px;top:175px;width:1.3px;height:32px;background:#111;"></div>
<div class="a" style="left:920.6px;top:175px;width:1.3px;height:32px;background:#111;"></div>
<div class="a" style="left:1000.6px;top:175px;width:1.3px;height:32px;background:#111;"></div>
<div class="a" style="left:1096.8px;top:175px;width:1.3px;height:32px;background:#111;"></div>
<div class="a" style="left:1221.3px;top:175px;width:1.3px;height:32px;background:#111;"></div>
<div class="a" style="left:871.8px;top:207px;width:1.3px;height:31.5px;background:#111;"></div>
<div class="a" style="left:1046.8px;top:207px;width:1.3px;height:31.5px;background:#111;"></div>
<div class="a" style="left:1221.5px;top:238px;width:1px;height:33px;background:#111;"></div>
<div class="a" style="left:1274.0px;top:238px;width:1px;height:33px;background:#111;"></div>
<div class="t" style="top:175px;font-size:8.5px;line-height:10px;height:10px;right:610.00px;color:#111;direction:rtl;transform:scaleY(1.17);transform-origin:100% 8px;">מספר זהות (9 ספרות)</div>
<div class="t" style="top:175px;font-size:8.5px;line-height:10px;height:10px;right:730.00px;color:#111;direction:rtl;transform:scaleY(1.17);transform-origin:100% 8px;">שם משפחה</div>
<div class="t" style="top:175px;font-size:8.5px;line-height:10px;height:10px;right:847.00px;color:#111;direction:rtl;transform:scaleY(1.17);transform-origin:100% 8px;">שם פרטי</div>
<div class="t" style="top:175px;font-size:8.5px;line-height:10px;height:10px;right:935.00px;color:#111;direction:rtl;transform:scaleY(1.17);transform-origin:100% 8px;">שם האב:</div>
<div class="t" style="top:176px;font-size:8.5px;line-height:10px;height:10px;right:1008.40px;color:#111;direction:rtl;transform:scaleY(1.17);transform-origin:100% 8px;">תאריך עליה</div>
<div class="t" style="top:176px;font-size:8.5px;line-height:10px;height:10px;right:1085.40px;color:#111;direction:rtl;transform:scaleY(1.17);transform-origin:100% 8px;">תאריך לידה</div>
<div class="t" style="top:208px;font-size:8.5px;line-height:10px;height:10px;right:611.30px;color:#111;direction:rtl;transform:scaleY(1.17);transform-origin:100% 8px;">כתובת פרטית</div>
<div class="t" style="top:210px;font-size:9px;line-height:10px;height:10px;right:934.30px;color:#111;direction:rtl;transform:scaleY(1.17);transform-origin:100% 8px;">דואר אלקטרוני</div>
<div class="t" style="top:207px;font-size:8.5px;line-height:10px;height:10px;right:1073.00px;color:#111;direction:rtl;transform:scaleY(1.17);transform-origin:100% 8px;">מספר טלפון</div>
<div class="t" style="top:240px;font-size:8.5px;line-height:10px;height:10px;right:610.80px;color:#111;direction:rtl;transform:scaleY(1.17);transform-origin:100% 8px;">מין</div>
<div class="t" style="top:240px;font-size:8.5px;line-height:10px;height:10px;right:656.30px;color:#111;direction:rtl;transform:scaleY(1.17);transform-origin:100% 8px;">מצב משפחתי</div>
<div class="t" style="top:274px;font-size:9.3px;line-height:10px;height:10px;right:600.00px;color:#000;font-weight:700;direction:rtl;transform:scaleY(1.0);transform-origin:100% 8px;">ג. פרטים על ילדיי שבשנת המס</div>
<div class="t" style="top:283px;font-size:8.5px;line-height:10px;height:10px;right:610.00px;color:#111;font-family:'Liberation Serif',serif;direction:rtl;transform:scaleY(1.17);transform-origin:100% 8px;">סמן/י V ליד שם הילד : בטור 1</div>
<div class="t" style="top:292px;font-size:8.5px;line-height:10px;height:10px;right:680.00px;color:#111;font-family:'Liberation Serif',serif;direction:rtl;transform:scaleY(1.17);transform-origin:100% 8px;">בטור 2</div>
<div class="a" style="left:1215px;top:302.1px;width:105.6px;height:1.3px;background:#111;"></div>
<div class="a" style="left:1215px;top:320.2px;width:105.6px;height:1.3px;background:#111;"></div>
<div class="a" style="left:1215px;top:346.7px;width:105.6px;height:1.3px;background:#111;"></div>
<div class="a" style="left:1215px;top:373.2px;width:105.6px;height:1.3px;background:#111;"></div>
<div class="a" style="left:1215px;top:399.7px;width:105.6px;height:1.3px;background:#111;"></div>
<div class="a" style="left:1215px;top:426.2px;width:105.6px;height:1.3px;background:#111;"></div>
<div class="a" style="left:1215px;top:452.7px;width:105.6px;height:1.3px;background:#111;"></div>
<div class="a" style="left:1215px;top:479.2px;width:105.6px;height:1.3px;background:#111;"></div>
<div class="a" style="left:1215px;top:505.7px;width:105.6px;height:1.3px;background:#111;"></div>
<div class="a" style="left:1215px;top:532.1px;width:105.6px;height:1.3px;background:#111;"></div>
<div class="a" style="left:1215px;top:556.4px;width:105.6px;height:1.3px;background:#111;"></div>
<div class="a" style="left:1215px;top:579.9px;width:105.6px;height:1.3px;background:#111;"></div>
<div class="a" style="left:1294.8px;top:302px;width:1.3px;height:279.2px;background:#111;"></div>
<div class="a" style="left:1306.9px;top:302px;width:1.3px;height:279.2px;background:#111;"></div>
<div class="a" style="left:1319.3px;top:302px;width:1.3px;height:279.2px;background:#111;"></div>
<div class="t" style="top:306px;font-size:10px;line-height:11px;height:11px;right:603.50px;color:#111;font-family:'Liberation Serif',serif;direction:rtl;transform:scaleY(1.17);transform-origin:100% 9px;">1</div>
<div class="t" style="top:306px;font-size:10px;line-height:11px;height:11px;right:616.00px;color:#111;font-family:'Liberation Serif',serif;direction:rtl;transform:scaleY(1.17);transform-origin:100% 9px;">2</div>
<div class="t" style="top:307px;font-size:8.5px;line-height:10px;height:10px;right:659.50px;color:#111;direction:rtl;transform:scaleY(1.17);transform-origin:100% 8px;">שם</div>
<div class="t" style="top:585px;font-size:9.3px;line-height:10px;height:10px;right:602.00px;color:#000;font-weight:700;direction:rtl;transform:scaleY(1.0);transform-origin:100% 8px;">ו. פרטים על בן/בת הזוג</div>
<div class="a" style="left:1215px;top:598.5px;width:102.8px;height:1px;background:#111;"></div>
<div class="a" style="left:1215px;top:629.5px;width:102.8px;height:1px;background:#111;"></div>
<div class="a" style="left:1215px;top:647.5px;width:102.8px;height:1px;background:#111;"></div>
<div class="a" style="left:1316.7px;top:599px;width:1px;height:49px;background:#111;"></div>
<div class="t" style="top:600px;font-size:8.5px;line-height:10px;height:10px;right:612.20px;color:#111;direction:rtl;transform:scaleY(1.17);transform-origin:100% 8px;">מספר זהות</div>
<div class="a" style="left:1303px;top:634px;width:10px;height:10.5px;background:#fff;border:1px solid #222;box-sizing:border-box;"></div>
<div class="t" style="top:633px;font-size:8.5px;line-height:10px;height:10px;right:628.30px;color:#111;direction:rtl;transform:scaleY(1.17);transform-origin:100% 8px;">אין לבן/בת הזוג כל הכנסה</div>
<div class="t" style="top:650px;font-size:9.3px;line-height:10px;height:10px;right:606.70px;color:#000;font-weight:700;direction:rtl;transform:scaleY(1.0);transform-origin:100% 8px;">ז. שינויים במהלך השנה</div>
<div class="a" style="left:776px;top:663.8px;width:545.8px;height:1px;background:#111;"></div>
<div class="a" style="left:776px;top:681.8px;width:545.8px;height:1px;background:#111;"></div>
<div class="a" style="left:776px;top:701.5px;width:545.8px;height:1px;background:#111;"></div>
<div class="a" style="left:776px;top:719.8px;width:545.8px;height:1px;background:#111;"></div>
<div class="a" style="left:776.1px;top:664px;width:1px;height:57px;background:#111;"></div>
<div class="a" style="left:1251.5px;top:664px;width:1px;height:57px;background:#111;"></div>
<div class="a" style="left:1320.7px;top:664px;width:1px;height:57px;background:#111;"></div>
<div class="a" style="left:860.5px;top:664px;width:1.4px;height:57px;background:#111;"></div>
<div class="a" style="left:963.0px;top:664px;width:1.4px;height:57px;background:#111;"></div>
<div class="t" style="top:666px;font-size:8.5px;line-height:10px;height:10px;right:610.30px;color:#111;direction:rtl;transform:scaleY(1.17);transform-origin:100% 8px;">תאריך השינוי</div>
<div class="t" style="top:666px;font-size:8.5px;line-height:10px;height:10px;right:790.00px;color:#111;direction:rtl;transform:scaleY(1.17);transform-origin:100% 8px;">פרטי השינוי</div>
<div class="t" style="top:667px;font-size:8.5px;line-height:10px;height:10px;right:966.20px;color:#111;direction:rtl;transform:scaleY(1.17);transform-origin:100% 8px;">תאריך ההודעה:</div>
<div class="t" style="top:667px;font-size:8.5px;line-height:10px;height:10px;right:1072.50px;color:#111;direction:rtl;transform:scaleY(1.17);transform-origin:100% 8px;">חתימת העובד/ת</div>
<div class="t" style="top:723px;font-size:9.3px;line-height:10px;height:10px;right:633.80px;color:#000;font-weight:700;direction:rtl;transform:scaleY(1.0);transform-origin:100% 8px;">הצהרה</div>
<div class="a" style="left:774px;top:735px;width:547.5px;height:68.5px;border:1px solid #222;box-sizing:border-box;"></div>
<div class="t" style="top:738px;font-size:7.9px;line-height:9px;height:9px;right:614.60px;color:#111;direction:rtl;transform:scaleY(1.17);transform-origin:100% 7px;">אני מצהיר/ה כי הפרטים שמסרתי בטופס זה הינם מלאים ונכונים. ידוע לי שהשמטה או מסירת פרטים לא נכונים הינה עבירה על פקודת מס</div>
<div class="t" style="top:748px;font-size:7.75px;line-height:9px;height:9px;right:645.80px;color:#111;direction:rtl;transform:scaleY(1.17);transform-origin:100% 7px;">הכנסה. &nbsp; אני מתחייב/ת להודיע למעביד על כל שינוי שיחול בפרטי האישיים ובפרטים דלעיל &nbsp;תוך שבוע ימים מתאריך השינוי</div>
<div class="a" style="left:824.8px;top:787.7px;width:109.0px;height:1px;background:#333;"></div>
<div class="a" style="left:1191px;top:788.5px;width:108.8px;height:1px;background:#333;"></div>
<div class="t" style="top:791px;font-size:8.5px;line-height:10px;height:10px;right:1004.60px;color:#111;direction:rtl;transform:scaleY(1.17);transform-origin:100% 8px;">חתימת המבקש/ת</div>
<div class="t" style="top:791px;font-size:8.5px;line-height:10px;height:10px;right:660.70px;color:#111;direction:rtl;transform:scaleY(1.17);transform-origin:100% 8px;">תאריך</div>
<div class="t" style="top:807px;font-size:9.3px;line-height:10px;height:10px;right:600.50px;color:#000;font-weight:700;direction:rtl;transform:scaleY(1.0);transform-origin:100% 8px;">פרטי בנק</div>
<div class="a" style="left:778px;top:818.9px;width:548px;height:1px;background:#111;"></div>
<div class="a" style="left:777.8px;top:819px;width:1px;height:21px;background:#111;"></div>
<div class="a" style="left:860.5px;top:819px;width:1px;height:21px;background:#111;"></div>
<div class="a" style="left:997.3px;top:819px;width:1px;height:21px;background:#111;"></div>
<div class="a" style="left:1105.5px;top:819px;width:1px;height:21px;background:#111;"></div>
<div class="a" style="left:1163.9px;top:819px;width:1px;height:21px;background:#111;"></div>
<div class="a" style="left:1247.2px;top:819px;width:1px;height:21px;background:#111;"></div>
<div class="a" style="left:1325.0px;top:819px;width:1px;height:21px;background:#111;"></div>
<div class="t" style="top:820px;font-size:8.5px;line-height:10px;height:10px;right:611.20px;color:#111;direction:rtl;transform:scaleY(1.17);transform-origin:100% 8px;">מס' בנק</div>
<div class="t" style="top:821px;font-size:8.5px;line-height:10px;height:10px;right:682.10px;color:#111;direction:rtl;transform:scaleY(1.17);transform-origin:100% 8px;">שם הבנק</div>
<div class="t" style="top:821px;font-size:8.5px;line-height:10px;height:10px;right:765.00px;color:#111;direction:rtl;transform:scaleY(1.17);transform-origin:100% 8px;">מס' הסניף</div>
<div class="t" style="top:821px;font-size:8.5px;line-height:10px;height:10px;right:825.20px;color:#111;direction:rtl;transform:scaleY(1.17);transform-origin:100% 8px;">שם הסניף</div>
<div class="t" style="top:822px;font-size:8.5px;line-height:10px;height:10px;right:932.00px;color:#111;direction:rtl;transform:scaleY(1.17);transform-origin:100% 8px;">כתובת הסניף</div>
<div class="t" style="top:821px;font-size:8.5px;line-height:10px;height:10px;right:1067.40px;color:#111;direction:rtl;transform:scaleY(1.17);transform-origin:100% 8px;">חשבון</div>
<div class="a" style="left:573px;top:840.4px;width:791px;height:30.5px;background:linear-gradient(to right,#223a45 0%,#21373f 45%,#1d2f41 75%,#1b2b40 100%);"></div>
<div class="a" style="left:1106px;top:840.4px;width:37px;height:30.5px;background:rgba(255,255,255,.17);"></div>
<div class="a" style="left:1106px;top:869px;width:37px;height:2px;background:#76b9ed;"></div>
<div class="a" style="left:1183px;top:869px;width:32px;height:2px;background:#76b9ed;"></div>
<div class="a" style="left:1221px;top:869px;width:32px;height:2px;background:#76b9ed;"></div>
<div class="a" style="left:1296px;top:869px;width:31px;height:2px;background:#76b9ed;"></div>
<div class="a" style="left:1116px;top:847px;width:16.5px;height:16px;background:#b30b00;border-radius:2.5px"></div>
<svg style="left:1118.5px;top:849.5px;" width="12" height="11" viewBox="0 0 12 11"><path d="M1 10 C4 8 5.5 4 5.2 1.2 C5 0 6.6 0 6.5 1.4 C6.3 4 8 6.6 11 7.4 C9 6.6 4 7.6 1 10 z" fill="none" stroke="#fff" stroke-width="1"/></svg>
<svg style="left:1152px;top:845.5px;" width="20" height="20" viewBox="0 0 20 20"><defs><linearGradient id="eg2" x1="0" y1="1" x2="1" y2="0"><stop offset="0" stop-color="#1a6fd0"/><stop offset="0.55" stop-color="#2aa7d8"/><stop offset="1" stop-color="#5fd85a"/></linearGradient></defs><g transform="scale(0.816)"><path d="M12.200 0.500 a11.600 11.600 0 0 1 11.600 10 c0.300 3.600 -2.400 6.300 -5.800 6.300 c-3 0 -4 -1.600 -3.400 -3.200 c0.800 -2 -1.200 -4.400 -4 -4.400 c-3.600 0 -6.400 3 -6.200 6.600 c0.200 4 3.400 7 7.600 7.600 a11.600 11.600 0 0 1 0.200 -22.900 z" fill="url(#eg2)"/><path d="M4.200 15.800 c-0.200 -3.600 2.600 -6.600 6.200 -6.600 c2.800 0 4.800 2.400 4 4.400 c-0.600 1.600 0.400 3.200 3.400 3.200 c2 0 3.800 -1 4.900 -2.500 c-1.300 5.300 -6 9.200 -11.300 9.200 c-4 -0.600 -7 -3.700 -7.200 -7.700 z" fill="#0c59a4"/></g></svg>
<svg style="left:1188px;top:845.5px;" width="20" height="20" viewBox="0 0 20 20"><circle cx="10" cy="10" r="9" fill="#e33b2e"/><path d="M10 10 L2.2 5.5 A9 9 0 0 0 8.5 18.9 z" fill="#30a14e"/><path d="M10 10 L8.5 18.9 A9 9 0 0 0 18.6 7.4 z" fill="#fbc116"/><circle cx="10" cy="10" r="4.2" fill="#fff"/><circle cx="10" cy="10" r="3.3" fill="#4a8af4"/><circle cx="5.5" cy="14.5" r="5" fill="#e8e8ee"/><text x="2.4" y="15.8" font-size="3.2" font-family="Liberation Sans" fill="#4a3f9a" font-weight="700">ניצנים</text></svg>
<svg style="left:1228px;top:846.5px;" width="18" height="17" viewBox="0 0 18 17"><rect x="6" y="0.5" width="11.5" height="16" fill="#fff" stroke="#1f7244" stroke-width="1"/><path d="M9 4 h7 M9 7 h7 M9 10 h7 M9 13 h7 M12.5 1 v15" stroke="#1f7244" stroke-width="1"/><rect x="0" y="2.5" width="10.5" height="12" fill="#1f7244"/><path d="M3 5.5 l4.5 6 M7.5 5.5 l-4.5 6" stroke="#fff" stroke-width="1.5"/></svg>
<svg style="left:1264px;top:848px;" width="20" height="15" viewBox="0 0 20 15"><path d="M0 5 L10 0 L20 5 V15 H0 z" fill="#1e88d7"/><path d="M0 5.5 L10 11.5 L20 5.5 V15 H0 z" fill="#37a5ee"/><path d="M0 15 L10 8.5 L20 15 z" fill="#fff"/></svg>
<svg style="left:1301px;top:847px;" width="20" height="16" viewBox="0 0 20 16"><path d="M0 1 h7.5 l1.5 2 h11 v13 h-20 z" fill="#f5c84c"/><rect x="0" y="5" width="20" height="11" fill="#fbd968"/><rect x="4" y="9.5" width="12" height="6.5" fill="#3f94d9"/><rect x="6.5" y="12" width="7" height="4" fill="#fbd968"/></svg>
<svg style="left:1343.5px;top:848.5px;" width="14" height="12" viewBox="0 0 14 12"><path d="M1.600 0 v2 M1.600 6.500 v5.300" stroke="#fff" stroke-width="1.100"/><rect x="0.300" y="3.300" width="2.600" height="2.400" fill="#fff"/><rect x="5" y="3.600" width="8" height="4.800" fill="none" stroke="#fff" stroke-width="1.100"/><path d="M5 0 v1.700 h8 v-1.700 M5 11.800 v-1.800 h8 v1.800" fill="none" stroke="#fff" stroke-width="1.100"/></svg>
<svg style="left:930px;top:866px;" width="10" height="10" viewBox="0 0 10 10"><circle cx="5" cy="5" r="4" fill="#fff" stroke="#7a7a7a" stroke-width="1.2"/></svg>
<!-- p4_status -->
<div class="t" style="top:1023px;font-size:10.8px;line-height:12px;height:12px;left:10.60px;color:#444;">100%</div>
<svg style="left:48.4px;top:1025.5px;" width="7" height="7" viewBox="0 0 7 7"><path d="M3.5 0 v7 M0 3.5 h7" stroke="#555" stroke-width="1.4"/></svg>
<div class="a" style="left:59.4px;top:1028.6px;width:99.2px;height:1px;background:#a0a0a0;"></div>
<div class="a" style="left:106.2px;top:1023px;width:4.8px;height:11px;background:#666;"></div>
<div class="a" style="left:163px;top:1028.3px;width:6px;height:1.4px;background:#555;"></div>
<svg style="left:186px;top:1022px;" width="14" height="13" viewBox="0 0 14 13"><path d="M0.5 0.5 h11 v6 M0.5 0.5 v9.5 h5.5" fill="none" stroke="#6a6a6a" stroke-width="1"/><path d="M2.5 3 h7 M2.5 5 h5 M2.5 7 h3.5" stroke="#6a6a6a" stroke-width="1"/><circle cx="9.8" cy="9" r="3.6" fill="#8a8a8a" stroke="#5a5a5a" stroke-width="0.8"/><path d="M7 8 c2 1 3.5 -1 5.6 0.2" stroke="#eee" stroke-width="0.8" fill="none"/></svg>
<div class="a" style="left:212px;top:1019px;width:37.7px;height:21px;background:#c8c8c8;"></div>
<svg style="left:224px;top:1022px;" width="14" height="13" viewBox="0 0 14 13"><rect x="0.5" y="0.5" width="13" height="12" fill="none" stroke="#555" stroke-width="1"/><path d="M2.5 3 h9 M2.5 5.2 h9 M2.5 7.4 h9 M2.5 9.6 h9" stroke="#555" stroke-width="1"/></svg>
<svg style="left:262px;top:1022px;" width="13" height="13.5" viewBox="0 0 13 13.5"><path d="M6.5 1.5 v10.5 M0.5 0.8 c2.4 -0.4 4.4 0 6 0.9 c1.6 -0.9 3.6 -1.3 6 -0.9 v10 c-2.4 -0.4 -4.4 0 -6 0.9 c-1.6 -0.9 -3.6 -1.3 -6 -0.9 z" fill="none" stroke="#666" stroke-width="1"/><path d="M2 3.2 h3 M2 5.2 h3 M2 7.2 h3 M2 9.2 h3 M8 3.2 h3 M8 5.2 h3 M8 7.2 h3 M8 9.2 h3" stroke="#666" stroke-width="0.9"/><path d="M5 12 l1.5 1.5 l1.5 -1.5" fill="none" stroke="#666" stroke-width="0.9"/></svg>
<div class="t" style="top:1022px;font-size:11.9px;line-height:14px;height:14px;right:7.30px;color:#444;">עמוד 1 מתוך 1</div>
<div class="t" style="top:1022px;font-size:11.9px;line-height:14px;height:14px;right:101.70px;color:#444;">0 מילים</div>
<svg style="left:1747px;top:1022px;" width="16" height="13" viewBox="0 0 16 13"><path d="M7 1.8 c-2 -1 -4.5 -1 -6.5 -0.5 v9.5 c2 -0.5 4.5 -0.5 6.5 0.5 c0.6 -0.3 1.2 -0.5 2 -0.6 M7 1.8 v9.5 M7 1.8 c0.6 -0.3 1.3 -0.5 2 -0.6" fill="none" stroke="#777" stroke-width="1"/><path d="M10 0.8 h5 v7 h-5 z" fill="none" stroke="#777" stroke-width="0.9"/><path d="M10.8 4.2 l1.5 1.6 l2.6 -3.6" fill="none" stroke="#666" stroke-width="1"/><path d="M7 11.3 v1.5" stroke="#777"/></svg>
<div class="t" style="top:1022px;font-size:12.3px;line-height:14px;height:14px;right:190.60px;color:#444;">אנגלית (ארצות הברית)</div>
<svg style="left:1577px;top:1022px;" width="14" height="14" viewBox="0 0 14 14"><circle cx="3.2" cy="3" r="2.8" fill="#555"/><path d="M7 1 h6.5 v12 h-12.5 v-6" fill="none" stroke="#555" stroke-width="1"/><path d="M7.5 3 h5.5" stroke="#555" stroke-width="2"/><path d="M2.5 8 h2 M5.5 8 h2 M8.5 8 h2 M11 8 h1.5 M2.5 10.5 h2 M5.5 10.5 h2 M8.5 10.5 h2 M11 10.5 h1.5" stroke="#555" stroke-width="1.3"/></svg>
<div class="a" style="left:4.5px;top:1040px;width:1px;height:40px;background:#70828a;"></div>
<svg style="left:25px;top:1052px;" width="17" height="16" viewBox="0 0 17 16"><path d="M0.7 0.7 h15.6 v11 h-5.5 l-2.8 2.8 l-2.8 -2.8 h-4.5 z" fill="none" stroke="#fff" stroke-width="1.2"/></svg>
<div class="t" style="top:1045px;font-size:11.3px;line-height:12px;height:12px;left:-211.00px;width:600px;text-align:center;color:#fff;">10:27</div>
<div class="t" style="top:1063px;font-size:11.3px;line-height:12px;height:12px;left:-212.00px;width:600px;text-align:center;color:#fff;letter-spacing:0.12px;">03/01/2024</div>
<div class="t" style="top:1053px;font-size:12px;line-height:14px;height:14px;right:1768.80px;color:#fff;">עבר</div>
<svg style="left:163px;top:1053.5px;" width="17" height="14" viewBox="0 0 17 14"><rect x="3.5" y="1" width="12.5" height="8.5" fill="none" stroke="#fff" stroke-width="1.1"/><path d="M9.7 9.5 v3 M6 12.7 h7.5" stroke="#fff" stroke-width="1.1"/><rect x="0.5" y="0.5" width="4.5" height="4" fill="#233c47" stroke="#fff" stroke-width="0.9"/><path d="M2.7 4.5 v8.2 h3.5" fill="none" stroke="#fff" stroke-width="0.9"/></svg>
<svg style="left:187px;top:1052.5px;" width="17" height="15" viewBox="0 0 17 15"><path d="M0.6 5 h3 l3.6 -3.6 v12.2 l-3.6 -3.6 h-3 z" fill="none" stroke="#fff" stroke-width="1.1"/><path d="M9 5.3 c1 1.2 1 3.2 0 4.4 M11 3.6 c1.8 2.2 1.8 5.6 0 7.8" fill="none" stroke="#fff" stroke-width="1.1"/><path d="M13.2 1.8 c2.6 3.2 2.6 8.200 0 11.4" fill="none" stroke="#8c9aa2" stroke-width="1"/></svg>
<svg style="left:213.3px;top:1056px;" width="12" height="7" viewBox="0 0 12 7"><path d="M0.7 6.5 L6 1.2 L11.3 6.5" fill="none" stroke="#fff" stroke-width="1.3"/></svg>
<svg style="left:251px;top:1051.5px;" width="25" height="17" viewBox="0 0 25 17"><path d="M21 3 h2.8 v10.5 a2.4 2.4 0 0 1 -2.4 2.4 h-18 a2.4 2.4 0 0 1 -2.400 -2.4 v-12.5 h20 v12.500 a2.4 2.4 0 0 0 2.4 2.4" fill="none" stroke="#fff" stroke-width="1.6"/><path d="M3.5 4.2 h14.500" stroke="#fff" stroke-width="1.4"/><rect x="3.800" y="7.2" width="6.5" height="5.800" fill="none" stroke="#fff" stroke-width="1.3"/><path d="M12.500 7.400 h5.500 M12.500 10.100 h5.500 M12.500 12.800 h5.500" stroke="#fff" stroke-width="1.2"/></svg>
<div class="a" style="left:1135px;top:1040px;width:48px;height:40px;background:rgba(255,255,255,0.18);"></div>
<div class="a" style="left:1135px;top:1078px;width:48px;height:2px;background:#76b9ed;"></div>
<div class="a" style="left:1188px;top:1078px;width:40px;height:2px;background:#76b9ed;"></div>
<div class="a" style="left:1286px;top:1078px;width:40px;height:2px;background:#76b9ed;"></div>
<div class="a" style="left:1344.5px;top:1078px;width:30.09999999999991px;height:2px;background:#76b9ed;"></div>
<div class="a" style="left:1433px;top:1078px;width:39.700000000000045px;height:2px;background:#76b9ed;"></div>
<div class="a" style="left:1335.6px;top:1078px;width:7px;height:2px;background:#5a8ab5;"></div>
<svg style="left:1148px;top:1048px;" width="23" height="23" viewBox="0 0 23 23"><rect x="9" y="2.500" width="13" height="17.500" fill="#fff"/><path d="M11 5.500 h9 M11 8 h9 M11 10.500 h9 M11 13 h9 M11 15.500 h9 M11 18 h9" stroke="#2b579a" stroke-width="1.3"/><path d="M0 2.500 L13 0 V23 L0 20.500 z" fill="#2b579a"/><path d="M2.500 8 l1.700 7 l1.900 -6.500 l1.900 6.500 l1.700 -7" fill="none" stroke="#fff" stroke-width="1.400"/></svg>
<div class="a" style="left:1197px;top:1049.4px;width:21.3px;height:20.4px;background:#b30b00;border-radius:3.5px"></div>
<svg style="left:1200.5px;top:1052.5px;" width="15" height="14" viewBox="0 0 15 14"><path d="M1 13 C5 10.500 7 5 6.600 1.500 C6.400 0 8.400 0 8.300 1.800 C8 5 10.500 8.600 14 9.600 C11.500 8.600 5 10 1 13 z" fill="none" stroke="#fff" stroke-width="1.300"/></svg>
<svg style="left:1245px;top:1048px;" width="24.5" height="24" viewBox="0 0 24.5 24"><defs><linearGradient id="eg1" x1="0" y1="1" x2="1" y2="0"><stop offset="0" stop-color="#1a6fd0"/><stop offset="0.55" stop-color="#2aa7d8"/><stop offset="1" stop-color="#5fd85a"/></linearGradient></defs><path d="M12.200 0.500 a11.600 11.600 0 0 1 11.600 10 c0.300 3.600 -2.400 6.300 -5.800 6.300 c-3 0 -4 -1.600 -3.400 -3.200 c0.800 -2 -1.200 -4.400 -4 -4.400 c-3.600 0 -6.400 3 -6.200 6.600 c0.200 4 3.400 7 7.600 7.600 a11.600 11.600 0 0 1 0.200 -22.900 z" fill="url(#eg1)"/><path d="M4.200 15.800 c-0.200 -3.600 2.600 -6.600 6.200 -6.600 c2.800 0 4.800 2.400 4 4.400 c-0.600 1.600 0.400 3.200 3.400 3.200 c2 0 3.800 -1 4.900 -2.500 c-1.300 5.300 -6 9.200 -11.300 9.200 c-4 -0.600 -7 -3.700 -7.200 -7.700 z" fill="#0c59a4"/></svg>
<svg style="left:1294px;top:1048px;" width="24" height="24" viewBox="0 0 24 24"><circle cx="12" cy="12" r="11.500" fill="#e33b2e"/><path d="M12 12 L2 6.300 A11.500 11.500 0 0 0 10 23.300 z" fill="#30a14e"/><path d="M12 12 L10 23.300 A11.500 11.500 0 0 0 23 8.800 z" fill="#fbc116"/><path d="M12 6.500 h10.200 a11.500 11.500 0 0 0 -20.200 -0.200 z" fill="#e33b2e"/><circle cx="12" cy="12" r="5.400" fill="#fff"/><circle cx="12" cy="12" r="4.300" fill="#4a8af4"/></svg>
<svg style="left:1292px;top:1058px;" width="15.5" height="15.5" viewBox="0 0 15.5 15.5"><circle cx="7.700" cy="7.700" r="7.500" fill="#eeeef3"/><text x="2" y="8.500" font-size="4.500" font-family="Liberation Sans" fill="#4a3f9a" font-weight="700">ניצנים</text><path d="M2.500 10.500 c3 1.500 7 1.500 10 0" fill="none" stroke="#c77" stroke-width="0.700"/></svg>
<svg style="left:1344px;top:1048px;" width="23" height="23" viewBox="0 0 23 23"><rect x="9" y="2.500" width="13" height="17.500" fill="#fff" stroke="#1f7244" stroke-width="1"/><path d="M11 6 h10 M11 9.500 h10 M11 13 h10 M11 16.500 h10 M16.500 3 v17" stroke="#1f7244" stroke-width="1.200"/><path d="M0 2.500 L13 0 V23 L0 20.500 z" fill="#1f7244"/><path d="M3.500 7.500 l5.500 8 M9 7.500 l-5.500 8" stroke="#fff" stroke-width="1.800"/></svg>
<svg style="left:1392px;top:1049px;" width="24.5" height="22" viewBox="0 0 24.5 22"><path d="M0 8 L12.200 0 L24.500 8 V22 H0 z" fill="#1574c4"/><path d="M2.500 5.500 h19.500 v12 h-19.500 z" fill="#fff"/><path d="M0 8 L12.200 16 L24.500 8 V22 H0 z" fill="#37a5ee"/><path d="M0 22 L12.200 13.500 L24.500 22 z" fill="#1e88d7"/></svg>
<svg style="left:1442px;top:1050.4px;" width="22" height="18.6" viewBox="0 0 22 18.6"><path d="M0 0.500 h8 l1.800 2.300 h12.200 v15.800 h-22 z" fill="#f0b93a"/><rect x="0" y="5" width="22" height="13.600" fill="#fbd45e"/><rect x="4" y="11" width="14" height="7.600" fill="#3f94d9"/><rect x="7" y="14" width="8" height="4.600" fill="#fbd45e"/></svg>
<svg style="left:1495.5px;top:1052px;" width="17" height="15" viewBox="0 0 17 15"><path d="M2 0 v2.600 M2 8.200 v6.500" stroke="#fff" stroke-width="1.300"/><rect x="0.400" y="4.100" width="3.100" height="2.900" fill="#fff"/><rect x="6" y="4.500" width="10" height="6" fill="none" stroke="#fff" stroke-width="1.300"/><path d="M6 0 v2.100 h10 v-2.100 M6 14.700 v-2.200 h10 v2.200" fill="none" stroke="#fff" stroke-width="1.300"/></svg>
<div class="a" style="left:1528px;top:1040px;width:344px;height:40px;background:#f2f2f2;border-top:1px solid #cfcfcf;box-sizing:border-box;"></div>
<div class="t" style="top:1052px;font-size:15px;line-height:17px;height:17px;right:88.50px;color:#2b2b2b;">הקלד כאן כדי לחפש</div>
<svg style="left:1844px;top:1052px;" width="17" height="17" viewBox="0 0 17 17"><circle cx="10.500" cy="6.200" r="5.200" fill="none" stroke="#333" stroke-width="1.300"/><path d="M6.800 10 L0.700 16.200" stroke="#333" stroke-width="1.500"/></svg>
<svg style="left:1530px;top:1044px;" width="70" height="32" viewBox="0 0 70 32"><path d="M30.2 3.5999999999999996 C34.212 11.388 34.212 11.388 42.0 15.4 C34.212 19.412 34.212 19.412 30.2 27.200000000000003 C26.188 19.412 26.188 19.412 18.4 15.4 C26.188 11.388 26.188 11.388 30.2 3.5999999999999996 z" fill="#f7b928"/><path d="M53 13.600000000000001 C55.04 17.560000000000002 55.04 17.560000000000002 59 19.6 C55.04 21.64 55.04 21.64 53 25.6 C50.96 21.64 50.96 21.64 47 19.6 C50.96 17.560000000000002 50.96 17.560000000000002 53 13.600000000000001 z" fill="#f9c23c"/><path d="M11.2 19.7 C12.661999999999999 22.538 12.661999999999999 22.538 15.5 24 C12.661999999999999 25.462 12.661999999999999 25.462 11.2 28.3 C9.738 25.462 9.738 25.462 6.8999999999999995 24 C9.738 22.538 9.738 22.538 11.2 19.7 z" fill="#2d9be0"/><circle cx="46.700" cy="5.800" r="1.900" fill="#e8552d"/><circle cx="65" cy="25.600" r="1.900" fill="#7dbb42"/></svg>
<svg style="left:1887.7px;top:1052px;" width="17" height="16.5" viewBox="0 0 17 16.5"><path d="M0 2.300 L7.200 1.300 V7.800 H0 z M8.200 1.150 L17 0 V7.800 H8.200 z M0 8.800 H7.200 V15.300 L0 14.300 z M8.200 8.800 H17 V16.500 L8.200 15.400 z" fill="#fff"/></svg>
<!-- p5_dialog -->
<div class="a" style="left:646px;top:220.5px;width:577.5px;height:439px;background:#f0f0f0;border:1px solid #7d7d7d;box-sizing:border-box;box-shadow:0 3px 12px 2px rgba(0,0,0,.32);"></div>
<div class="a" style="left:647px;top:221.5px;width:575.5px;height:22.5px;background:#fff;"></div>
<div class="t l" style="top:227px;font-size:9.8px;line-height:11px;height:11px;left:653.00px;color:#000;letter-spacing:-0.23px;">Print</div>
<svg style="left:1207.5px;top:227.5px;" width="9" height="9" viewBox="0 0 9 9"><path d="M0.300 0.300 L8.700 8.700 M8.700 0.300 L0.300 8.700" stroke="#222" stroke-width="1"/></svg>
<div class="a" style="left:650px;top:252.5px;width:569.5px;height:52.5px;border:1px solid #e2e2e2;box-sizing:border-box;box-shadow:inset 0 0 0 1px #f7f7f7;"></div>
<div class="t l" style="top:259px;font-size:9.2px;line-height:10px;height:10px;left:660.50px;color:#1a1a1a;letter-spacing:-0.394px;">Printer:</div>
<div class="t l" style="top:286px;font-size:9.2px;line-height:10px;height:10px;left:660.50px;color:#1a1a1a;letter-spacing:-0.7px;">Copies:</div>
<div class="a" style="left:690px;top:254.5px;width:201.5px;height:18.5px;background:#fff;border:1px solid #0a64d8;box-sizing:border-box;box-shadow:0 0 0 1px rgba(10,100,216,.35);"></div>
<div class="a" style="left:876px;top:255.5px;width:14.5px;height:16.5px;background:#cfe4f9;"></div>
<svg style="left:879.5px;top:261.5px;" width="8" height="5" viewBox="0 0 8 5"><path d="M0.500 0.500 L4 4 L7.500 0.500" fill="none" stroke="#333" stroke-width="1"/></svg>
<div class="t l" style="top:259px;font-size:9.2px;line-height:10px;height:10px;left:694.00px;color:#1a1a1a;letter-spacing:-0.601px;">KONICA MINOLTA 367SeriesPCL</div>
<div class="a" style="left:895.5px;top:255.5px;width:64.0px;height:18.2px;background:#e1e1e1;border:1px solid #adadad;box-sizing:border-box;"></div>
<div class="t l" style="top:260px;font-size:9.2px;line-height:10px;height:10px;left:908.50px;color:#1a1a1a;letter-spacing:-0.343px;">Properties</div>
<div class="a" style="left:964.2px;top:255.5px;width:63.8px;height:18.2px;background:#e1e1e1;border:1px solid #adadad;box-sizing:border-box;"></div>
<div class="t l" style="top:260px;font-size:9.2px;line-height:10px;height:10px;left:977.70px;color:#1a1a1a;letter-spacing:-0.452px;">Advanced</div>
<div class="t l" style="top:257px;font-size:9.2px;line-height:10px;height:10px;left:1175.70px;color:#1a1aee;letter-spacing:-0.3px;text-decoration:underline;">Help</div>
<svg style="left:1197.5px;top:255.5px;" width="11" height="11" viewBox="0 0 11 11"><circle cx="5.5" cy="5.5" r="4.9" fill="none" stroke="#666" stroke-width="1"/><text x="5.5" y="8.3" text-anchor="middle" font-size="8" font-weight="700" font-family="Liberation Sans" fill="#666">?</text></svg>
<svg style="left:901.2px;top:285px;" width="10" height="10" viewBox="0 0 10 10"><rect x="0.5" y="0.5" width="9" height="9" fill="#fff" stroke="#333" stroke-width="1"/></svg>
<div class="t l" style="top:286px;font-size:9.2px;line-height:10px;height:10px;left:913.70px;color:#1a1a1a;letter-spacing:-0.268px;">Print in grayscale (black and white)</div>
<svg style="left:1063px;top:285px;" width="10" height="10" viewBox="0 0 10 10"><rect x="0.5" y="0.5" width="9" height="9" fill="#fff" stroke="#333" stroke-width="1"/></svg>
<div class="t l" style="top:286px;font-size:9.2px;line-height:10px;height:10px;left:1075.70px;color:#1a1a1a;letter-spacing:-0.358px;">Save ink/toner</div>
<svg style="left:1147px;top:284.5px;" width="11" height="11" viewBox="0 0 11 11"><circle cx="5.5" cy="5.5" r="4.9" fill="none" stroke="#666" stroke-width="1"/><text x="5.5" y="8.3" text-anchor="middle" font-size="8" font-weight="700" font-family="Liberation Sans" fill="#666">i</text></svg>
<div class="a" style="left:650.3px;top:307.5px;width:337.5px;height:60.9px;border:1px solid #e2e2e2;box-sizing:border-box;box-shadow:inset 0 0 0 1px #f7f7f7;"></div>
<div class="t l" style="top:315px;font-size:9.2px;line-height:10px;height:10px;left:661.60px;color:#1a1a1a;font-weight:700;letter-spacing:-0.532px;">Pages to Print</div>
<svg style="left:660px;top:330.7px;" width="12" height="12" viewBox="0 0 12 12"><circle cx="6" cy="6" r="4.6" fill="#fff" stroke="#333" stroke-width="1"/><circle cx="6" cy="6" r="2.5" fill="#1a1a1a"/></svg>
<div class="t l" style="top:332px;font-size:9.2px;line-height:10px;height:10px;left:673.70px;color:#1a1a1a;letter-spacing:-0.142px;">All</div>
<div class="a" style="left:891px;top:328px;width:65.5px;height:17px;background:#f0f0f0;border-top:1.300px solid #7a7a7a;border-right:1px solid #e3e3e3;border-bottom:1px solid #e3e3e3;box-sizing:border-box;"></div>
<svg style="left:665.3px;top:351px;" width="5" height="7" viewBox="0 0 5 7"><path d="M0 0 v6.400 l4.200 -3.200 z" fill="#333"/></svg>
<div class="t l" style="top:350px;font-size:9.2px;line-height:10px;height:10px;left:673.70px;color:#1a1a1a;letter-spacing:-0.577px;">More Options</div>
<div class="a" style="left:650.3px;top:370.9px;width:337.5px;height:118.9px;border:1px solid #e2e2e2;box-sizing:border-box;box-shadow:inset 0 0 0 1px #f7f7f7;"></div>
<div class="t l" style="top:380px;font-size:9.2px;line-height:10px;height:10px;left:661.60px;color:#1a1a1a;font-weight:700;letter-spacing:-0.556px;">Page Sizing &amp; Handling</div>
<svg style="left:755.9px;top:379.5px;" width="11" height="11" viewBox="0 0 11 11"><circle cx="5.5" cy="5.5" r="4.9" fill="none" stroke="#666" stroke-width="1"/><text x="5.5" y="8.3" text-anchor="middle" font-size="8" font-weight="700" font-family="Liberation Sans" fill="#666">i</text></svg>
<div class="a" style="left:662.1px;top:394.7px;width:74.9px;height:22.9px;background:#e1e1e1;border:1px solid #adadad;box-sizing:border-box;"></div>
<div class="t l" style="top:402px;font-size:9.2px;line-height:10px;height:10px;left:691.60px;color:#1a1a1a;letter-spacing:-0.624px;">Size</div>
<div class="a" style="left:696.3px;top:410.3px;width:3.8px;height:0.8px;background:#1a1a1a;"></div>
<div class="a" style="left:741.4px;top:394.7px;width:75.0px;height:22.9px;background:#e1e1e1;border:1px solid #adadad;box-sizing:border-box;"></div>
<div class="t l" style="top:402px;font-size:9.2px;line-height:10px;height:10px;left:767.00px;color:#1a1a1a;letter-spacing:-0.598px;">Poster</div>
<div class="a" style="left:821.1px;top:394.7px;width:74.9px;height:22.9px;background:#e1e1e1;border:1px solid #adadad;box-sizing:border-box;"></div>
<div class="t l" style="top:402px;font-size:9.2px;line-height:10px;height:10px;left:842.50px;color:#1a1a1a;letter-spacing:-0.1px;">Multiple</div>
<div class="a" style="left:900.6px;top:394.7px;width:75.0px;height:22.9px;background:#e1e1e1;border:1px solid #adadad;box-sizing:border-box;"></div>
<div class="t l" style="top:402px;font-size:9.2px;line-height:10px;height:10px;left:923.70px;color:#1a1a1a;letter-spacing:-0.312px;">Booklet</div>
<svg style="left:660px;top:427.3px;" width="12" height="12" viewBox="0 0 12 12"><circle cx="6" cy="6" r="4.6" fill="#fff" stroke="#333" stroke-width="1"/><circle cx="6" cy="6" r="2.5" fill="#1a1a1a"/></svg>
<div class="t l" style="top:429px;font-size:9.2px;line-height:10px;height:10px;left:673.70px;color:#1a1a1a;letter-spacing:-0.306px;">Fit</div>
<svg style="left:778.1px;top:427.3px;" width="12" height="12" viewBox="0 0 12 12"><circle cx="6" cy="6" r="4.6" fill="#fff" stroke="#333" stroke-width="1"/></svg>
<div class="t l" style="top:429px;font-size:9.2px;line-height:10px;height:10px;left:791.50px;color:#1a1a1a;letter-spacing:-0.426px;">Actual size</div>
<svg style="left:660px;top:447.2px;" width="12" height="12" viewBox="0 0 12 12"><circle cx="6" cy="6" r="4.6" fill="#fff" stroke="#333" stroke-width="1"/></svg>
<div class="t l" style="top:449px;font-size:9.2px;line-height:10px;height:10px;left:673.70px;color:#1a1a1a;letter-spacing:-0.492px;">Shrink oversized pages</div>
<svg style="left:778.1px;top:447.2px;" width="12" height="12" viewBox="0 0 12 12"><circle cx="6" cy="6" r="4.6" fill="#fff" stroke="#333" stroke-width="1"/></svg>
<div class="t l" style="top:449px;font-size:9.2px;line-height:10px;height:10px;left:791.50px;color:#1a1a1a;letter-spacing:-0.563px;">Custom Scale:</div>
<div class="a" style="left:865px;top:444.7px;width:42.7px;height:16px;background:#f0f0f0;border-top:1.300px solid #7a7a7a;border-left:1.300px solid #7a7a7a;border-right:1px solid #e8e8e8;border-bottom:1px solid #e8e8e8;box-sizing:border-box;"></div>
<div class="t l" style="top:448px;font-size:9.2px;line-height:10px;height:10px;left:866.90px;color:#9a9a9a;letter-spacing:-0.7px;">100</div>
<div class="t l" style="top:449px;font-size:9.2px;line-height:10px;height:10px;left:912.20px;color:#1a1a1a;letter-spacing:-0.7px;">%</div>
<svg style="left:661.2px;top:470.4px;" width="10" height="10" viewBox="0 0 10 10"><rect x="0.5" y="0.5" width="9" height="9" fill="#fff" stroke="#333" stroke-width="1"/></svg>
<div class="t l" style="top:471px;font-size:9.2px;line-height:10px;height:10px;left:673.70px;color:#1a1a1a;letter-spacing:-0.523px;">Choose paper source by PDF page size</div>
<div class="a" style="left:650.3px;top:492.6px;width:337.5px;height:76.4px;border:1px solid #e2e2e2;box-sizing:border-box;box-shadow:inset 0 0 0 1px #f7f7f7;"></div>
<svg style="left:661.2px;top:495.3px;" width="10" height="10" viewBox="0 0 10 10"><rect x="0.5" y="0.5" width="9" height="9" fill="#fff" stroke="#333" stroke-width="1"/><path d="M2 5 l2.2 2.300 l3.800 -4.800" fill="none" stroke="#1a1a1a" stroke-width="1.100"/></svg>
<div class="t l" style="top:495px;font-size:9.2px;line-height:10px;height:10px;left:673.60px;color:#1a1a1a;letter-spacing:-0.379px;">Print on both sides of paper</div>
<svg style="left:672.6px;top:510.79999999999995px;" width="12" height="12" viewBox="0 0 12 12"><circle cx="6" cy="6" r="4.6" fill="#fff" stroke="#333" stroke-width="1"/><circle cx="6" cy="6" r="2.5" fill="#1a1a1a"/></svg>
<div class="t l" style="top:512px;font-size:9.2px;line-height:10px;height:10px;left:685.90px;color:#1a1a1a;letter-spacing:-0.399px;">Flip on long edge</div>
<svg style="left:769px;top:510.79999999999995px;" width="12" height="12" viewBox="0 0 12 12"><circle cx="6" cy="6" r="4.6" fill="#fff" stroke="#333" stroke-width="1"/></svg>
<div class="t l" style="top:512px;font-size:9.2px;line-height:10px;height:10px;left:782.10px;color:#1a1a1a;letter-spacing:-0.324px;">Flip on short edge</div>
<div class="t l" style="top:533px;font-size:9.2px;line-height:10px;height:10px;left:661.50px;color:#1a1a1a;letter-spacing:-0.255px;">Orientation:</div>
<svg style="left:660px;top:547.2px;" width="12" height="12" viewBox="0 0 12 12"><circle cx="6" cy="6" r="4.6" fill="#fff" stroke="#333" stroke-width="1"/><circle cx="6" cy="6" r="2.5" fill="#1a1a1a"/></svg>
<div class="t l" style="top:549px;font-size:9.2px;line-height:10px;height:10px;left:673.60px;color:#1a1a1a;letter-spacing:-0.356px;">Auto</div>
<svg style="left:719.8px;top:547.2px;" width="12" height="12" viewBox="0 0 12 12"><circle cx="6" cy="6" r="4.6" fill="#fff" stroke="#333" stroke-width="1"/></svg>
<div class="t l" style="top:549px;font-size:9.2px;line-height:10px;height:10px;left:733.90px;color:#1a1a1a;letter-spacing:-0.194px;">Portrait</div>
<svg style="left:788.3px;top:547.2px;" width="12" height="12" viewBox="0 0 12 12"><circle cx="6" cy="6" r="4.6" fill="#fff" stroke="#333" stroke-width="1"/></svg>
<div class="t l" style="top:549px;font-size:9.2px;line-height:10px;height:10px;left:802.20px;color:#1a1a1a;letter-spacing:-0.657px;">Landscape</div>
<div class="a" style="left:650.3px;top:571.9px;width:337.5px;height:52.2px;border:1px solid #e2e2e2;box-sizing:border-box;box-shadow:inset 0 0 0 1px #f7f7f7;"></div>
<div class="t l" style="top:579px;font-size:9.2px;line-height:10px;height:10px;left:661.50px;color:#1a1a1a;font-weight:700;letter-spacing:-0.619px;">Comments &amp; Forms</div>
<div class="a" style="left:661px;top:592px;width:179px;height:17.7px;background:#fff;border:1px solid #adadad;box-sizing:border-box;"></div>
<div class="a" style="left:825.5px;top:593px;width:13.5px;height:15.7px;background:#e5e5e5;"></div>
<svg style="left:828.5px;top:598.5px;" width="8" height="5" viewBox="0 0 8 5"><path d="M0.500 0.500 L4 4 L7.500 0.500" fill="none" stroke="#333" stroke-width="1"/></svg>
<div class="t l" style="top:596px;font-size:9.2px;line-height:10px;height:10px;left:665.30px;color:#1a1a1a;letter-spacing:-0.441px;">Document</div>
<div class="a" style="left:844px;top:592.4px;width:102.6px;height:18.1px;background:#e1e1e1;border:1px solid #adadad;box-sizing:border-box;"></div>
<div class="t l" style="top:597px;font-size:9.2px;line-height:10px;height:10px;left:851.60px;color:#1a1a1a;letter-spacing:-0.414px;">Summarize Comments</div>
<div class="a" style="left:650.9px;top:629.3px;width:63.7px;height:18.4px;background:#e1e1e1;border:1px solid #adadad;box-sizing:border-box;"></div>
<div class="t l" style="top:634px;font-size:9.2px;line-height:10px;height:10px;left:659.20px;color:#1a1a1a;letter-spacing:-0.688px;">Page Setup...</div>
<div class="a" style="left:989.6px;top:307.5px;width:229.2px;height:294.0px;border:1px solid #e2e2e2;box-sizing:border-box;box-shadow:inset 0 0 0 1px #f7f7f7;"></div>
<div class="t l" style="top:310px;font-size:9.2px;line-height:10px;height:10px;left:1003.00px;color:#1a1a1a;letter-spacing:-0.545px;">Scale:&nbsp; 96%</div>
<div class="t l" style="top:328px;font-size:9.2px;line-height:10px;height:10px;left:1031.40px;color:#1a1a1a;letter-spacing:-0.7px;">8.27 x 11.69 Inches</div>
<div class="a" style="left:1030px;top:344.3px;width:150px;height:210.5px;background:#fff;border:1.400px solid #000;box-sizing:border-box;"></div>
<div class="a" style="left:1031.4px;top:345.7px;width:147.2px;height:207.7px;border:2.600px solid #d2d2d2;box-sizing:border-box;"></div>
<svg style="left:1020px;top:338px;" width="170" height="222" viewBox="0 0 170 222"><g transform="scale(0.2055)" fill="none" stroke-linecap="round"><path d="M70 882 C 130 850 200 840 260 860 C 330 885 380 920 420 952" stroke="#efb0bd" stroke-width="16" opacity=".42"/><path d="M75 808 C 180 800 270 830 330 870 C 380 905 410 935 432 962" stroke="#c9dcf0" stroke-width="12" opacity=".6"/><path d="M80 850 C 160 820 240 820 310 850" stroke="#f6d2b0" stroke-width="12" opacity=".5"/><path d="M420 945 C 470 890 540 855 610 850 C 670 848 720 862 755 885" stroke="#efb0bd" stroke-width="16" opacity=".42"/><path d="M440 962 C 500 910 580 880 650 880 C 700 882 740 905 760 940" stroke="#d9c6e6" stroke-width="12" opacity=".45"/><path d="M300 850 C 350 860 390 880 425 905" stroke="#f3e3a6" stroke-width="10" opacity=".5"/></g><rect x="48.7" y="58.0" width="35.6" height="3.400" fill="#ffff00"/><rect x="64.7" y="141.8" width="77.5" height="3.400" fill="#ffff00"/><path d="M143.3 24.0 H139.8" stroke="#7a86c0" stroke-width="1.500" stroke-dasharray="2.2 0.5 1.2 0.5 3 0.5 1.6 0.5" opacity=".92"/><path d="M142.9 29.4 H126.4" stroke="#2b3a7a" stroke-width="1.500" stroke-dasharray="3 0.5 1.8 0.5 1.2 0.5 2.4 0.5" opacity=".92"/><path d="M142.9 32.9 H131.6" stroke="#444" stroke-width="1.500" stroke-dasharray="3 0.5 1.8 0.5 1.2 0.5 2.4 0.5" opacity=".92"/><path d="M142.9 39.1 H26.3" stroke="#2a2a2a" stroke-width="1.500" stroke-dasharray="2.2 0.5 1.2 0.5 3 0.5 1.6 0.5" opacity=".92"/><path d="M142.9 41.7 H128.5" stroke="#2a2a2a" stroke-width="1.500" stroke-dasharray="1.4 0.5 2.6 0.5 1 0.5 3.4 0.5 2 0.5" opacity=".92"/><path d="M89.4 48.3 H73.4" stroke="#2b3a8a" stroke-width="1.500" stroke-dasharray="2.2 0.5 1.2 0.5 3 0.5 1.6 0.5" opacity=".92"/><path d="M142.9 50.6 H139.8" stroke="#d9822b" stroke-width="1.500" stroke-dasharray="1.4 0.5 2.6 0.5 1 0.5 3.4 0.5 2 0.5" opacity=".92"/><path d="M142.9 53.0 H27.7" stroke="#2a2a2a" stroke-width="1.500" stroke-dasharray="3 0.5 1.8 0.5 1.2 0.5 2.4 0.5" opacity=".92"/><path d="M142.9 55.5 H117.2" stroke="#2a2a2a" stroke-width="1.500" stroke-dasharray="2.2 0.5 1.2 0.5 3 0.5 1.6 0.5" opacity=".92"/><path d="M139.8 59.8 H48.7" stroke="#2a2a2a" stroke-width="1.500" stroke-dasharray="1.4 0.5 2.6 0.5 1 0.5 3.4 0.5 2 0.5" opacity=".92"/><path d="M139.8 63.1 H74.0" stroke="#2a2a2a" stroke-width="1.500" stroke-dasharray="2.2 0.5 1.2 0.5 3 0.5 1.6 0.5" opacity=".92"/><path d="M142.9 66.2 H65.4" stroke="#2a2a2a" stroke-width="1.500" stroke-dasharray="3 0.5 1.8 0.5 1.2 0.5 2.4 0.5" opacity=".92"/><path d="M142.9 69.1 H26.3" stroke="#2a2a2a" stroke-width="1.500" stroke-dasharray="1.4 0.5 2.6 0.5 1 0.5 3.4 0.5 2 0.5" opacity=".92"/><path d="M142.9 72.4 H128.5" stroke="#2a2a2a" stroke-width="1.500" stroke-dasharray="2.2 0.5 1.2 0.5 3 0.5 1.6 0.5" opacity=".92"/><path d="M142.2 77.7 H122.9" stroke="#1f3a8a" stroke-width="1.500" stroke-dasharray="2.2 0.5 1.2 0.5 3 0.5 1.6 0.5" opacity=".92"/><path d="M142.9 83.2 H119.2" stroke="#d9822b" stroke-width="1.500" stroke-dasharray="2.2 0.5 1.2 0.5 3 0.5 1.6 0.5" opacity=".92"/><path d="M142.9 85.9 H49.3" stroke="#2a2a2a" stroke-width="1.500" stroke-dasharray="1.4 0.5 2.6 0.5 1 0.5 3.4 0.5 2 0.5" opacity=".92"/><path d="M142.9 88.4 H26.3" stroke="#2a2a2a" stroke-width="1.500" stroke-dasharray="3 0.5 1.8 0.5 1.2 0.5 2.4 0.5" opacity=".92"/><path d="M142.9 91.1 H73.0" stroke="#2a2a2a" stroke-width="1.500" stroke-dasharray="2.2 0.5 1.2 0.5 3 0.5 1.6 0.5" opacity=".92"/><path d="M139.8 93.5 H48.9" stroke="#2a2a2a" stroke-width="1.500" stroke-dasharray="1.4 0.5 2.6 0.5 1 0.5 3.4 0.5 2 0.5" opacity=".92"/><path d="M142.9 96.0 H26.3" stroke="#2a2a2a" stroke-width="1.500" stroke-dasharray="3 0.5 1.8 0.5 1.2 0.5 2.4 0.5" opacity=".92"/><path d="M142.9 98.7 H26.3" stroke="#2a2a2a" stroke-width="1.500" stroke-dasharray="1.4 0.5 2.6 0.5 1 0.5 3.4 0.5 2 0.5" opacity=".92"/><path d="M142.9 101.3 H26.3" stroke="#2a2a2a" stroke-width="1.500" stroke-dasharray="3 0.5 1.8 0.5 1.2 0.5 2.4 0.5" opacity=".92"/><path d="M139.8 104.2 H73.0" stroke="#2a2a2a" stroke-width="1.500" stroke-dasharray="1.4 0.5 2.6 0.5 1 0.5 3.4 0.5 2 0.5" opacity=".92"/><path d="M142.9 107.3 H118.2" stroke="#2a2a2a" stroke-width="1.500" stroke-dasharray="2.2 0.5 1.2 0.5 3 0.5 1.6 0.5" opacity=".92"/><path d="M139.8 110.6 H100.7" stroke="#2a2a2a" stroke-width="1.500" stroke-dasharray="3 0.5 1.8 0.5 1.2 0.5 2.4 0.5" opacity=".92"/><path d="M142.9 118.2 H114.1" stroke="#d9822b" stroke-width="1.500" stroke-dasharray="3 0.5 1.8 0.5 1.2 0.5 2.4 0.5" opacity=".92"/><path d="M142.9 121.3 H26.3" stroke="#2a2a2a" stroke-width="1.500" stroke-dasharray="1.4 0.5 2.6 0.5 1 0.5 3.4 0.5 2 0.5" opacity=".92"/><path d="M142.9 123.9 H26.3" stroke="#2a2a2a" stroke-width="1.500" stroke-dasharray="2.2 0.5 1.2 0.5 3 0.5 1.6 0.5" opacity=".92"/><path d="M142.9 127.4 H90.4" stroke="#2a2a2a" stroke-width="1.500" stroke-dasharray="3 0.5 1.8 0.5 1.2 0.5 2.4 0.5" opacity=".92"/><path d="M142.9 130.1 H115.1" stroke="#d9822b" stroke-width="1.500" stroke-dasharray="1.4 0.5 2.6 0.5 1 0.5 3.4 0.5 2 0.5" opacity=".92"/><path d="M142.9 133.2 H69.9" stroke="#2a2a2a" stroke-width="1.500" stroke-dasharray="2.2 0.5 1.2 0.5 3 0.5 1.6 0.5" opacity=".92"/><path d="M142.9 136.1 H79.1" stroke="#2a2a2a" stroke-width="1.500" stroke-dasharray="1.4 0.5 2.6 0.5 1 0.5 3.4 0.5 2 0.5" opacity=".92"/><path d="M142.9 140.8 H104.8" stroke="#d9822b" stroke-width="1.500" stroke-dasharray="2.2 0.5 1.2 0.5 3 0.5 1.6 0.5" opacity=".92"/><path d="M141.8 143.5 H64.7" stroke="#2a2a2a" stroke-width="1.500" stroke-dasharray="1.4 0.5 2.6 0.5 1 0.5 3.4 0.5 2 0.5" opacity=".92"/><path d="M142.9 146.4 H26.3" stroke="#2a2a2a" stroke-width="1.500" stroke-dasharray="2.2 0.5 1.2 0.5 3 0.5 1.6 0.5" opacity=".92"/><path d="M142.9 149.0 H55.5" stroke="#2a2a2a" stroke-width="1.500" stroke-dasharray="1.4 0.5 2.6 0.5 1 0.5 3.4 0.5 2 0.5" opacity=".92"/><path d="M139.8 152.1 H104.8" stroke="#2a2a2a" stroke-width="1.500" stroke-dasharray="2.2 0.5 1.2 0.5 3 0.5 1.6 0.5" opacity=".92"/><path d="M142.9 157.2 H121.3" stroke="#d9822b" stroke-width="1.500" stroke-dasharray="2.2 0.5 1.2 0.5 3 0.5 1.6 0.5" opacity=".92"/><path d="M139.8 160.3 H26.3" stroke="#2a2a2a" stroke-width="1.500" stroke-dasharray="3 0.5 1.8 0.5 1.2 0.5 2.4 0.5" opacity=".92"/><path d="M139.8 162.8 H113.1" stroke="#2a2a2a" stroke-width="1.500" stroke-dasharray="2.2 0.5 1.2 0.5 3 0.5 1.6 0.5" opacity=".92"/><path d="M142.9 166.9 H57.6" stroke="#2a2a2a" stroke-width="1.500" stroke-dasharray="2.2 0.5 1.2 0.5 3 0.5 1.6 0.5" opacity=".92"/><path d="M142.9 170.2 H26.3" stroke="#2a2a2a" stroke-width="1.500" stroke-dasharray="2.2 0.5 1.2 0.5 3 0.5 1.6 0.5" opacity=".92"/><path d="M142.9 173.3 H68.9" stroke="#2a2a2a" stroke-width="1.500" stroke-dasharray="3 0.5 1.8 0.5 1.2 0.5 2.4 0.5" opacity=".92"/><path d="M142.9 176.4 H30.8" stroke="#2a2a2a" stroke-width="1.500" stroke-dasharray="1.4 0.5 2.6 0.5 1 0.5 3.4 0.5 2 0.5" opacity=".92"/><path d="M142.9 179.9 H50.4" stroke="#2a2a2a" stroke-width="1.500" stroke-dasharray="2.2 0.5 1.2 0.5 3 0.5 1.6 0.5" opacity=".92"/><path d="M41.1 184.0 H26.3" stroke="#2a2a2a" stroke-width="1.500" stroke-dasharray="1.4 0.5 2.6 0.5 1 0.5 3.4 0.5 2 0.5" opacity=".92"/><path d="M119.2 202.5 H50.4" stroke="#2a2a2a" stroke-width="1.500" stroke-dasharray="1.4 0.5 2.6 0.5 1 0.5 3.4 0.5 2 0.5" opacity=".92"/><path d="M21 32.500 c6 -2 11 -2 15 0.300 c4 -2.300 9 -2.300 14 -0.300" fill="none" stroke="#6a4aa5" stroke-width="0.900"/><path d="M22 34.200 c6 -1.600 10 -1.600 14 0.200 c4 -1.800 8 -1.800 13 -0.200" fill="none" stroke="#e58a3a" stroke-width="0.800"/><path d="M48 28 c0 -5 2 -8.500 5.500 -10 c-0.500 4 -2 7.500 -5.500 10 z" fill="none" stroke="#7fc4ea" stroke-width="0.800"/><path d="M41 17 c1 -1.500 2.500 -1.500 3 0 c0.500 1.600 -0.500 2.500 -1.500 3" fill="none" stroke="#e58a3a" stroke-width="0.800"/></svg>
<div class="t" style="top:356px;font-size:11.5px;line-height:12px;height:12px;right:854.50px;color:#43389b;font-weight:700;letter-spacing:-0.4px;">ניצנים</div>
<div class="a" style="left:1001.6px;top:563.1px;width:22.9px;height:18.5px;background:#e1e1e1;border:1px solid #adadad;box-sizing:border-box;"></div>
<div class="t l" style="top:568px;font-size:9.2px;line-height:10px;height:10px;left:1010.30px;color:#1a1a1a;letter-spacing:-0.373px;">&lt;</div>
<div class="a" style="left:1185.2px;top:563.1px;width:22.6px;height:18.5px;background:#e1e1e1;border:1px solid #adadad;box-sizing:border-box;"></div>
<div class="t l" style="top:568px;font-size:9.2px;line-height:10px;height:10px;left:1194.00px;color:#1a1a1a;letter-spacing:-0.373px;">&gt;</div>
<div class="a" style="left:1043.4px;top:569.3px;width:121.6px;height:2px;background:#d8d8d8;"></div>
<svg style="left:1044.4px;top:563.8px;" width="9" height="15" viewBox="0 0 9 15"><path d="M0 0 h8.600 v10.500 l-4.300 4.200 l-4.300 -4.200 z" fill="#0a64d8"/></svg>
<div class="t l" style="top:587px;font-size:9.2px;line-height:10px;height:10px;left:1083.50px;color:#1a1a1a;letter-spacing:-0.7px;">Page 1 of 18</div>
<div class="a" style="left:1080.4px;top:629.3px;width:64.0px;height:18.4px;background:#e1e1e1;border:2px solid #0a64d8;box-sizing:border-box;"></div>
<div class="t l" style="top:634px;font-size:9.2px;line-height:10px;height:10px;left:1103.30px;color:#1a1a1a;letter-spacing:-0.343px;">Print</div>
<div class="a" style="left:1154px;top:629.3px;width:63.4px;height:18.4px;background:#e1e1e1;border:1px solid #adadad;box-sizing:border-box;"></div>
<div class="t l" style="top:634px;font-size:9.2px;line-height:10px;height:10px;left:1172.50px;color:#1a1a1a;letter-spacing:-0.489px;">Cancel</div>
<div class="a" style="left:690px;top:273px;width:201.5px;height:97.5px;background:#fff;border:1px solid #1979d9;box-sizing:border-box;box-shadow:2px 2px 3px rgba(0,0,0,.35);"></div>
<div class="a" style="left:691px;top:288px;width:199.5px;height:12.8px;background:#0a64d8;"></div>
<div class="t l" style="top:275px;font-size:9.2px;line-height:10px;height:10px;left:692.90px;color:#1a1a1a;letter-spacing:-0.578px;">Fax</div>
<div class="t l" style="top:289px;font-size:9.2px;line-height:10px;height:10px;left:692.90px;color:#fff;letter-spacing:-0.604px;">KONICA MINOLTA 367SeriesPCL</div>
<div class="t l" style="top:303px;font-size:9.2px;line-height:10px;height:10px;left:692.90px;color:#1a1a1a;letter-spacing:-0.49px;">Lexmark MX410 Series Class Driver</div>
<div class="t l" style="top:317px;font-size:9.2px;line-height:10px;height:10px;left:692.90px;color:#1a1a1a;letter-spacing:-0.403px;">Lexmark Universal Fax</div>
<div class="t l" style="top:330px;font-size:9.2px;line-height:10px;height:10px;left:692.90px;color:#1a1a1a;letter-spacing:-0.392px;">Microsoft XPS Document Writer</div>
<div class="t l" style="top:344px;font-size:9.2px;line-height:10px;height:10px;left:692.90px;color:#1a1a1a;letter-spacing:-0.463px;">OneNote for Windows 10</div>
<div class="t l" style="top:358px;font-size:9.2px;line-height:10px;height:10px;left:692.90px;color:#1a1a1a;letter-spacing:-0.544px;">Send To OneNote 2016</div>
</body>
</html>
